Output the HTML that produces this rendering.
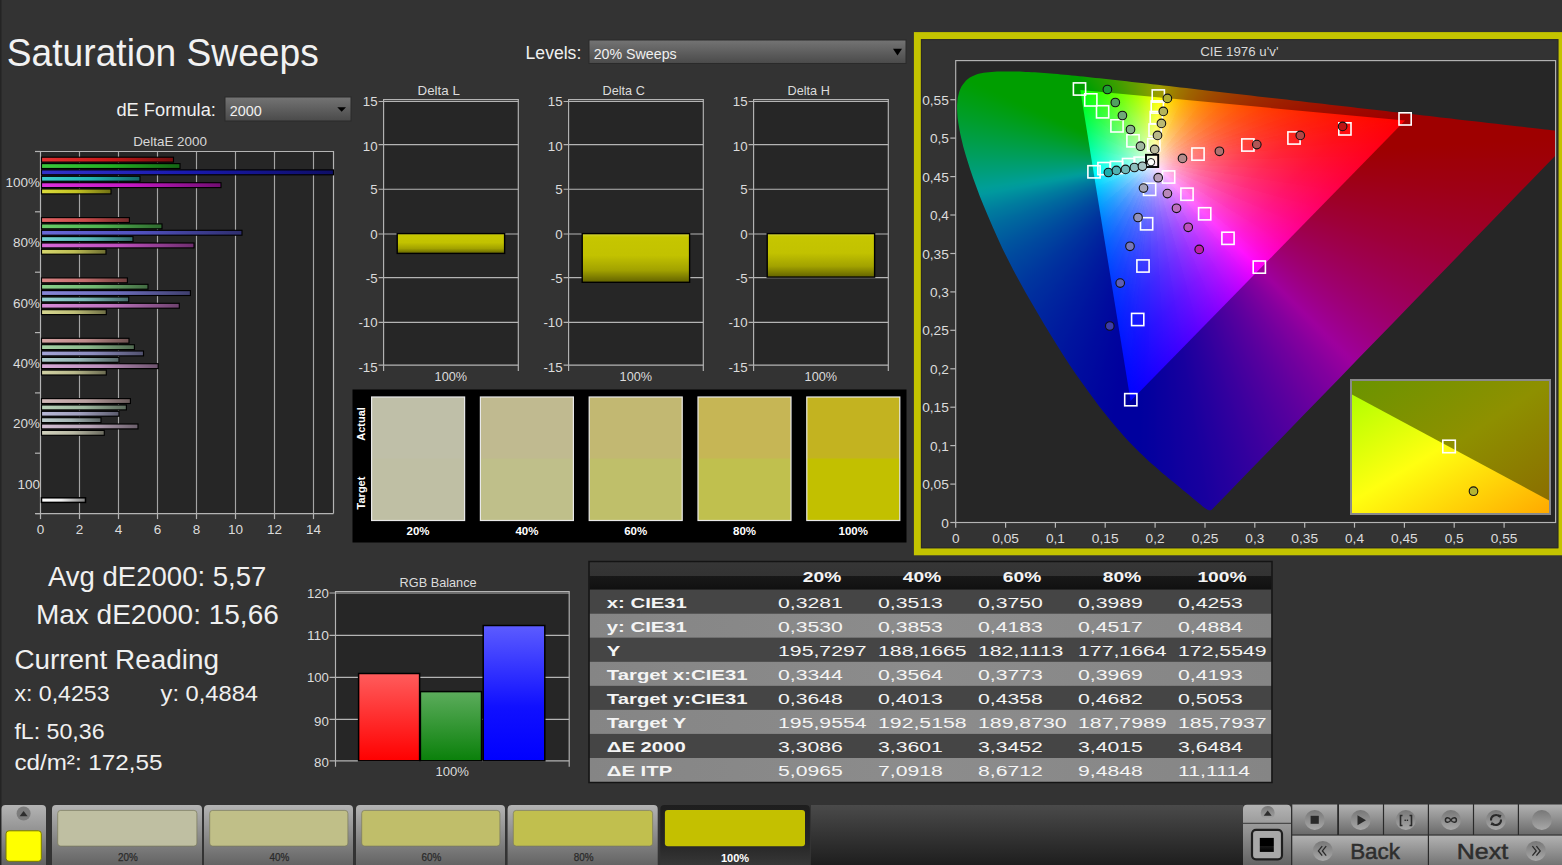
<!DOCTYPE html>
<html><head><meta charset="utf-8"><title>Saturation Sweeps</title>
<style>html,body{margin:0;padding:0;background:#333;width:1562px;height:865px;overflow:hidden}
svg text{font-family:"Liberation Sans",sans-serif}</style></head>
<body>
<svg width="1562" height="865" viewBox="0 0 1562 865" style="position:absolute;left:0;top:0" font-family='"Liberation Sans", sans-serif'>
<rect width="1562" height="865" fill="#333333"/>
<rect x="0" y="0" width="1.5" height="865" fill="#242424"/>
<text x="6.8" y="65.5" font-size="39.0" fill="#f2f2f2" text-anchor="start" font-weight="normal" textLength="312.0" lengthAdjust="spacingAndGlyphs" >Saturation Sweeps</text>
<text x="116.4" y="115.6" font-size="17.5" fill="#f0f0f0" text-anchor="start" font-weight="normal" textLength="99.5" lengthAdjust="spacingAndGlyphs" >dE Formula:</text>
<defs><linearGradient id="dd" x1="0" y1="0" x2="0" y2="1"><stop offset="0" stop-color="#747474"/><stop offset="1" stop-color="#4a4a4a"/></linearGradient></defs>
<rect x="225" y="97" width="126" height="24" fill="url(#dd)" stroke="#2a2a2a" stroke-width="1"/>
<text x="229.7" y="115.6" font-size="15.0" fill="#f0f0f0" text-anchor="start" font-weight="normal" textLength="32.0" lengthAdjust="spacingAndGlyphs" >2000</text>
<path d="M337.3 107.3 L346 107.3 L341.65 111.8 Z" fill="#000"/>
<text x="525.6" y="58.8" font-size="18.0" fill="#f0f0f0" text-anchor="start" font-weight="normal" textLength="55.7" lengthAdjust="spacingAndGlyphs" >Levels:</text>
<rect x="589" y="40" width="317" height="23.5" fill="url(#dd)" stroke="#2a2a2a" stroke-width="1"/>
<text x="593.7" y="58.8" font-size="15.0" fill="#f0f0f0" text-anchor="start" font-weight="normal" textLength="83.0" lengthAdjust="spacingAndGlyphs" >20% Sweeps</text>
<path d="M893 48.8 L902 48.8 L897.5 55.4 Z" fill="#000"/>
<text x="170.0" y="146.3" font-size="13.0" fill="#d8d8d8" text-anchor="middle" font-weight="normal" textLength="73.7" lengthAdjust="spacingAndGlyphs" >DeltaE 2000</text>
<rect x="40.5" y="151.5" width="293.0" height="362.1" fill="#262626"/>
<line x1="79.5" y1="151.5" x2="79.5" y2="513.6" stroke="#a4a4a4" stroke-width="1.15"/>
<line x1="118.5" y1="151.5" x2="118.5" y2="513.6" stroke="#a4a4a4" stroke-width="1.15"/>
<line x1="157.5" y1="151.5" x2="157.5" y2="513.6" stroke="#a4a4a4" stroke-width="1.15"/>
<line x1="196.5" y1="151.5" x2="196.5" y2="513.6" stroke="#a4a4a4" stroke-width="1.15"/>
<line x1="235.5" y1="151.5" x2="235.5" y2="513.6" stroke="#a4a4a4" stroke-width="1.15"/>
<line x1="274.5" y1="151.5" x2="274.5" y2="513.6" stroke="#a4a4a4" stroke-width="1.15"/>
<line x1="313.5" y1="151.5" x2="313.5" y2="513.6" stroke="#a4a4a4" stroke-width="1.15"/>
<polyline points="40.5,513.6 40.5,151.5 333.5,151.5 333.5,513.6" fill="none" stroke="#b4b4b4" stroke-width="1.2"/>
<line x1="35.5" y1="513.6" x2="333.5" y2="513.6" stroke="#b4b4b4" stroke-width="1.2"/>
<line x1="35.0" y1="151.5" x2="40.5" y2="151.5" stroke="#b4b4b4" stroke-width="1.2"/>
<line x1="35.0" y1="211.8" x2="40.5" y2="211.8" stroke="#b4b4b4" stroke-width="1.2"/>
<line x1="35.0" y1="272.2" x2="40.5" y2="272.2" stroke="#b4b4b4" stroke-width="1.2"/>
<line x1="35.0" y1="332.6" x2="40.5" y2="332.6" stroke="#b4b4b4" stroke-width="1.2"/>
<line x1="35.0" y1="392.9" x2="40.5" y2="392.9" stroke="#b4b4b4" stroke-width="1.2"/>
<line x1="35.0" y1="453.2" x2="40.5" y2="453.2" stroke="#b4b4b4" stroke-width="1.2"/>
<line x1="35.0" y1="513.6" x2="40.5" y2="513.6" stroke="#b4b4b4" stroke-width="1.2"/>
<line x1="40.5" y1="513.6" x2="40.5" y2="519.1" stroke="#b4b4b4" stroke-width="1.2"/>
<text x="40.5" y="534.0" font-size="13.5" fill="#dcdcdc" text-anchor="middle" font-weight="normal" >0</text>
<line x1="79.5" y1="513.6" x2="79.5" y2="519.1" stroke="#b4b4b4" stroke-width="1.2"/>
<text x="79.5" y="534.0" font-size="13.5" fill="#dcdcdc" text-anchor="middle" font-weight="normal" >2</text>
<line x1="118.5" y1="513.6" x2="118.5" y2="519.1" stroke="#b4b4b4" stroke-width="1.2"/>
<text x="118.5" y="534.0" font-size="13.5" fill="#dcdcdc" text-anchor="middle" font-weight="normal" >4</text>
<line x1="157.5" y1="513.6" x2="157.5" y2="519.1" stroke="#b4b4b4" stroke-width="1.2"/>
<text x="157.5" y="534.0" font-size="13.5" fill="#dcdcdc" text-anchor="middle" font-weight="normal" >6</text>
<line x1="196.5" y1="513.6" x2="196.5" y2="519.1" stroke="#b4b4b4" stroke-width="1.2"/>
<text x="196.5" y="534.0" font-size="13.5" fill="#dcdcdc" text-anchor="middle" font-weight="normal" >8</text>
<line x1="235.5" y1="513.6" x2="235.5" y2="519.1" stroke="#b4b4b4" stroke-width="1.2"/>
<text x="235.5" y="534.0" font-size="13.5" fill="#dcdcdc" text-anchor="middle" font-weight="normal" >10</text>
<line x1="274.5" y1="513.6" x2="274.5" y2="519.1" stroke="#b4b4b4" stroke-width="1.2"/>
<text x="274.5" y="534.0" font-size="13.5" fill="#dcdcdc" text-anchor="middle" font-weight="normal" >12</text>
<line x1="313.5" y1="513.6" x2="313.5" y2="519.1" stroke="#b4b4b4" stroke-width="1.2"/>
<text x="313.5" y="534.0" font-size="13.5" fill="#dcdcdc" text-anchor="middle" font-weight="normal" >14</text>
<text x="40.0" y="186.9" font-size="13.5" fill="#dcdcdc" text-anchor="end" font-weight="normal" >100%</text>
<text x="40.0" y="247.2" font-size="13.5" fill="#dcdcdc" text-anchor="end" font-weight="normal" >80%</text>
<text x="40.0" y="307.6" font-size="13.5" fill="#dcdcdc" text-anchor="end" font-weight="normal" >60%</text>
<text x="40.0" y="367.9" font-size="13.5" fill="#dcdcdc" text-anchor="end" font-weight="normal" >40%</text>
<text x="40.0" y="428.3" font-size="13.5" fill="#dcdcdc" text-anchor="end" font-weight="normal" >20%</text>
<text x="40.0" y="488.6" font-size="13.5" fill="#dcdcdc" text-anchor="end" font-weight="normal" >100</text>
<rect x="41.5" y="157.2" width="132.0" height="4.9" fill="url(#eb1)" stroke="#000" stroke-width="1.15"/>
<rect x="41.5" y="163.6" width="138.5" height="4.9" fill="url(#eb2)" stroke="#000" stroke-width="1.15"/>
<rect x="41.5" y="169.9" width="292.0" height="4.9" fill="url(#eb3)" stroke="#000" stroke-width="1.15"/>
<rect x="41.5" y="176.3" width="98.5" height="4.9" fill="url(#eb4)" stroke="#000" stroke-width="1.15"/>
<rect x="41.5" y="182.7" width="179.5" height="4.9" fill="url(#eb5)" stroke="#000" stroke-width="1.15"/>
<rect x="41.5" y="189.0" width="69.5" height="4.9" fill="url(#eb6)" stroke="#000" stroke-width="1.15"/>
<rect x="41.5" y="217.6" width="87.9" height="4.9" fill="url(#eb7)" stroke="#000" stroke-width="1.15"/>
<rect x="41.5" y="223.9" width="120.5" height="4.9" fill="url(#eb8)" stroke="#000" stroke-width="1.15"/>
<rect x="41.5" y="230.3" width="200.5" height="4.9" fill="url(#eb9)" stroke="#000" stroke-width="1.15"/>
<rect x="41.5" y="236.6" width="91.5" height="4.9" fill="url(#eb10)" stroke="#000" stroke-width="1.15"/>
<rect x="41.5" y="243.0" width="152.5" height="4.9" fill="url(#eb11)" stroke="#000" stroke-width="1.15"/>
<rect x="41.5" y="249.3" width="64.5" height="4.9" fill="url(#eb12)" stroke="#000" stroke-width="1.15"/>
<rect x="41.5" y="277.9" width="85.9" height="4.9" fill="url(#eb13)" stroke="#000" stroke-width="1.15"/>
<rect x="41.5" y="284.3" width="106.5" height="4.9" fill="url(#eb14)" stroke="#000" stroke-width="1.15"/>
<rect x="41.5" y="290.6" width="148.9" height="4.9" fill="url(#eb15)" stroke="#000" stroke-width="1.15"/>
<rect x="41.5" y="297.0" width="87.2" height="4.9" fill="url(#eb16)" stroke="#000" stroke-width="1.15"/>
<rect x="41.5" y="303.3" width="137.8" height="4.9" fill="url(#eb17)" stroke="#000" stroke-width="1.15"/>
<rect x="41.5" y="309.7" width="64.8" height="4.9" fill="url(#eb18)" stroke="#000" stroke-width="1.15"/>
<rect x="41.5" y="338.3" width="87.5" height="4.9" fill="url(#eb19)" stroke="#000" stroke-width="1.15"/>
<rect x="41.5" y="344.7" width="92.9" height="4.9" fill="url(#eb20)" stroke="#000" stroke-width="1.15"/>
<rect x="41.5" y="351.0" width="102.0" height="4.9" fill="url(#eb21)" stroke="#000" stroke-width="1.15"/>
<rect x="41.5" y="357.4" width="77.5" height="4.9" fill="url(#eb22)" stroke="#000" stroke-width="1.15"/>
<rect x="41.5" y="363.7" width="116.7" height="4.9" fill="url(#eb23)" stroke="#000" stroke-width="1.15"/>
<rect x="41.5" y="370.1" width="64.8" height="4.9" fill="url(#eb24)" stroke="#000" stroke-width="1.15"/>
<rect x="41.5" y="398.6" width="88.9" height="4.9" fill="url(#eb25)" stroke="#000" stroke-width="1.15"/>
<rect x="41.5" y="405.0" width="84.9" height="4.9" fill="url(#eb26)" stroke="#000" stroke-width="1.15"/>
<rect x="41.5" y="411.3" width="77.5" height="4.9" fill="url(#eb27)" stroke="#000" stroke-width="1.15"/>
<rect x="41.5" y="417.7" width="59.5" height="4.9" fill="url(#eb28)" stroke="#000" stroke-width="1.15"/>
<rect x="41.5" y="424.0" width="96.5" height="4.9" fill="url(#eb29)" stroke="#000" stroke-width="1.15"/>
<rect x="41.5" y="430.4" width="62.8" height="4.9" fill="url(#eb30)" stroke="#000" stroke-width="1.15"/>
<rect x="41.5" y="497.8" width="44.0" height="4.6" fill="url(#ebw)" stroke="#000" stroke-width="1.5"/>
<defs><linearGradient id="eb1" x1="0" y1="0" x2="1" y2="0"><stop offset="0" stop-color="rgb(225, 50, 50)"/><stop offset="0.5" stop-color="rgb(200, 25, 25)"/><stop offset="1" stop-color="rgb(115, 14, 14)"/></linearGradient><linearGradient id="eb2" x1="0" y1="0" x2="1" y2="0"><stop offset="0" stop-color="rgb(60, 200, 60)"/><stop offset="0.5" stop-color="rgb(35, 175, 35)"/><stop offset="1" stop-color="rgb(20, 101, 20)"/></linearGradient><linearGradient id="eb3" x1="0" y1="0" x2="1" y2="0"><stop offset="0" stop-color="rgb(50, 50, 200)"/><stop offset="0.5" stop-color="rgb(25, 25, 175)"/><stop offset="1" stop-color="rgb(14, 14, 101)"/></linearGradient><linearGradient id="eb4" x1="0" y1="0" x2="1" y2="0"><stop offset="0" stop-color="rgb(60, 205, 205)"/><stop offset="0.5" stop-color="rgb(35, 180, 180)"/><stop offset="1" stop-color="rgb(20, 104, 104)"/></linearGradient><linearGradient id="eb5" x1="0" y1="0" x2="1" y2="0"><stop offset="0" stop-color="rgb(220, 50, 220)"/><stop offset="0.5" stop-color="rgb(195, 25, 195)"/><stop offset="1" stop-color="rgb(113, 14, 113)"/></linearGradient><linearGradient id="eb6" x1="0" y1="0" x2="1" y2="0"><stop offset="0" stop-color="rgb(220, 220, 60)"/><stop offset="0.5" stop-color="rgb(195, 195, 35)"/><stop offset="1" stop-color="rgb(113, 113, 20)"/></linearGradient><linearGradient id="eb7" x1="0" y1="0" x2="1" y2="0"><stop offset="0" stop-color="rgb(225, 100, 100)"/><stop offset="0.5" stop-color="rgb(200, 75, 75)"/><stop offset="1" stop-color="rgb(115, 43, 43)"/></linearGradient><linearGradient id="eb8" x1="0" y1="0" x2="1" y2="0"><stop offset="0" stop-color="rgb(105, 205, 105)"/><stop offset="0.5" stop-color="rgb(80, 180, 80)"/><stop offset="1" stop-color="rgb(46, 104, 46)"/></linearGradient><linearGradient id="eb9" x1="0" y1="0" x2="1" y2="0"><stop offset="0" stop-color="rgb(105, 105, 215)"/><stop offset="0.5" stop-color="rgb(80, 80, 190)"/><stop offset="1" stop-color="rgb(46, 46, 110)"/></linearGradient><linearGradient id="eb10" x1="0" y1="0" x2="1" y2="0"><stop offset="0" stop-color="rgb(115, 210, 210)"/><stop offset="0.5" stop-color="rgb(90, 185, 185)"/><stop offset="1" stop-color="rgb(52, 107, 107)"/></linearGradient><linearGradient id="eb11" x1="0" y1="0" x2="1" y2="0"><stop offset="0" stop-color="rgb(215, 105, 215)"/><stop offset="0.5" stop-color="rgb(190, 80, 190)"/><stop offset="1" stop-color="rgb(110, 46, 110)"/></linearGradient><linearGradient id="eb12" x1="0" y1="0" x2="1" y2="0"><stop offset="0" stop-color="rgb(215, 215, 110)"/><stop offset="0.5" stop-color="rgb(190, 190, 85)"/><stop offset="1" stop-color="rgb(110, 110, 49)"/></linearGradient><linearGradient id="eb13" x1="0" y1="0" x2="1" y2="0"><stop offset="0" stop-color="rgb(220, 135, 135)"/><stop offset="0.5" stop-color="rgb(195, 110, 110)"/><stop offset="1" stop-color="rgb(113, 63, 63)"/></linearGradient><linearGradient id="eb14" x1="0" y1="0" x2="1" y2="0"><stop offset="0" stop-color="rgb(140, 210, 140)"/><stop offset="0.5" stop-color="rgb(115, 185, 115)"/><stop offset="1" stop-color="rgb(66, 107, 66)"/></linearGradient><linearGradient id="eb15" x1="0" y1="0" x2="1" y2="0"><stop offset="0" stop-color="rgb(135, 135, 215)"/><stop offset="0.5" stop-color="rgb(110, 110, 190)"/><stop offset="1" stop-color="rgb(63, 63, 110)"/></linearGradient><linearGradient id="eb16" x1="0" y1="0" x2="1" y2="0"><stop offset="0" stop-color="rgb(150, 210, 210)"/><stop offset="0.5" stop-color="rgb(125, 185, 185)"/><stop offset="1" stop-color="rgb(72, 107, 107)"/></linearGradient><linearGradient id="eb17" x1="0" y1="0" x2="1" y2="0"><stop offset="0" stop-color="rgb(215, 140, 215)"/><stop offset="0.5" stop-color="rgb(190, 115, 190)"/><stop offset="1" stop-color="rgb(110, 66, 110)"/></linearGradient><linearGradient id="eb18" x1="0" y1="0" x2="1" y2="0"><stop offset="0" stop-color="rgb(215, 215, 145)"/><stop offset="0.5" stop-color="rgb(190, 190, 120)"/><stop offset="1" stop-color="rgb(110, 110, 69)"/></linearGradient><linearGradient id="eb19" x1="0" y1="0" x2="1" y2="0"><stop offset="0" stop-color="rgb(215, 165, 165)"/><stop offset="0.5" stop-color="rgb(190, 140, 140)"/><stop offset="1" stop-color="rgb(110, 81, 81)"/></linearGradient><linearGradient id="eb20" x1="0" y1="0" x2="1" y2="0"><stop offset="0" stop-color="rgb(165, 210, 165)"/><stop offset="0.5" stop-color="rgb(140, 185, 140)"/><stop offset="1" stop-color="rgb(81, 107, 81)"/></linearGradient><linearGradient id="eb21" x1="0" y1="0" x2="1" y2="0"><stop offset="0" stop-color="rgb(165, 165, 215)"/><stop offset="0.5" stop-color="rgb(140, 140, 190)"/><stop offset="1" stop-color="rgb(81, 81, 110)"/></linearGradient><linearGradient id="eb22" x1="0" y1="0" x2="1" y2="0"><stop offset="0" stop-color="rgb(175, 205, 205)"/><stop offset="0.5" stop-color="rgb(150, 180, 180)"/><stop offset="1" stop-color="rgb(87, 104, 104)"/></linearGradient><linearGradient id="eb23" x1="0" y1="0" x2="1" y2="0"><stop offset="0" stop-color="rgb(215, 170, 215)"/><stop offset="0.5" stop-color="rgb(190, 145, 190)"/><stop offset="1" stop-color="rgb(110, 84, 110)"/></linearGradient><linearGradient id="eb24" x1="0" y1="0" x2="1" y2="0"><stop offset="0" stop-color="rgb(210, 210, 165)"/><stop offset="0.5" stop-color="rgb(185, 185, 140)"/><stop offset="1" stop-color="rgb(107, 107, 81)"/></linearGradient><linearGradient id="eb25" x1="0" y1="0" x2="1" y2="0"><stop offset="0" stop-color="rgb(210, 185, 185)"/><stop offset="0.5" stop-color="rgb(185, 160, 160)"/><stop offset="1" stop-color="rgb(107, 92, 92)"/></linearGradient><linearGradient id="eb26" x1="0" y1="0" x2="1" y2="0"><stop offset="0" stop-color="rgb(185, 210, 185)"/><stop offset="0.5" stop-color="rgb(160, 185, 160)"/><stop offset="1" stop-color="rgb(92, 107, 92)"/></linearGradient><linearGradient id="eb27" x1="0" y1="0" x2="1" y2="0"><stop offset="0" stop-color="rgb(185, 185, 215)"/><stop offset="0.5" stop-color="rgb(160, 160, 190)"/><stop offset="1" stop-color="rgb(92, 92, 110)"/></linearGradient><linearGradient id="eb28" x1="0" y1="0" x2="1" y2="0"><stop offset="0" stop-color="rgb(190, 205, 205)"/><stop offset="0.5" stop-color="rgb(165, 180, 180)"/><stop offset="1" stop-color="rgb(95, 104, 104)"/></linearGradient><linearGradient id="eb29" x1="0" y1="0" x2="1" y2="0"><stop offset="0" stop-color="rgb(210, 190, 210)"/><stop offset="0.5" stop-color="rgb(185, 165, 185)"/><stop offset="1" stop-color="rgb(107, 95, 107)"/></linearGradient><linearGradient id="eb30" x1="0" y1="0" x2="1" y2="0"><stop offset="0" stop-color="rgb(210, 210, 190)"/><stop offset="0.5" stop-color="rgb(185, 185, 165)"/><stop offset="1" stop-color="rgb(107, 107, 95)"/></linearGradient><linearGradient id="ebw" x1="0" y1="0" x2="1" y2="0"><stop offset="0" stop-color="#ffffff"/><stop offset="0.45" stop-color="#f0f0f0"/><stop offset="1" stop-color="#808080"/></linearGradient></defs>
<defs><linearGradient id="yb" x1="0" y1="0" x2="0" y2="1"><stop offset="0" stop-color="#d4d440"/><stop offset="0.07" stop-color="#c6c600"/><stop offset="0.45" stop-color="#c2c200"/><stop offset="0.75" stop-color="#a2a200"/><stop offset="1" stop-color="#626200"/></linearGradient></defs>
<text x="438.7" y="95.0" font-size="12.8" fill="#dcdcdc" text-anchor="middle" font-weight="normal" textLength="42.2" lengthAdjust="spacingAndGlyphs" >Delta L</text>
<rect x="383.6" y="99.6" width="134.7" height="265.5" fill="#262626"/>
<line x1="378.6" y1="101.5" x2="518.3" y2="101.5" stroke="#b4b4b4" stroke-width="1.15"/>
<text x="377.6" y="106.1" font-size="13.3" fill="#dcdcdc" text-anchor="end" font-weight="normal" >15</text>
<line x1="378.6" y1="144.6" x2="518.3" y2="144.6" stroke="#b4b4b4" stroke-width="1.15"/>
<text x="377.6" y="150.5" font-size="13.3" fill="#dcdcdc" text-anchor="end" font-weight="normal" >10</text>
<line x1="378.6" y1="189.2" x2="518.3" y2="189.2" stroke="#b4b4b4" stroke-width="1.15"/>
<text x="377.6" y="193.8" font-size="13.3" fill="#dcdcdc" text-anchor="end" font-weight="normal" >5</text>
<line x1="378.6" y1="234.0" x2="518.3" y2="234.0" stroke="#b4b4b4" stroke-width="1.15"/>
<text x="377.6" y="238.6" font-size="13.3" fill="#dcdcdc" text-anchor="end" font-weight="normal" >0</text>
<line x1="378.6" y1="277.6" x2="518.3" y2="277.6" stroke="#b4b4b4" stroke-width="1.15"/>
<text x="377.6" y="282.6" font-size="13.3" fill="#dcdcdc" text-anchor="end" font-weight="normal" >-5</text>
<line x1="378.6" y1="322.3" x2="518.3" y2="322.3" stroke="#b4b4b4" stroke-width="1.15"/>
<text x="377.6" y="326.9" font-size="13.3" fill="#dcdcdc" text-anchor="end" font-weight="normal" >-10</text>
<line x1="378.6" y1="365.1" x2="518.3" y2="365.1" stroke="#b4b4b4" stroke-width="1.15"/>
<text x="377.6" y="371.7" font-size="13.3" fill="#dcdcdc" text-anchor="end" font-weight="normal" >-15</text>
<polyline points="383.6,371.1 383.6,99.6 518.3,99.6 518.3,371.1" fill="none" stroke="#b4b4b4" stroke-width="1.15"/>
<rect x="397.2" y="233.6" width="107.4" height="19.8" fill="url(#yb)" stroke="#000" stroke-width="1.4"/>
<text x="450.8" y="380.5" font-size="13.3" fill="#dcdcdc" text-anchor="middle" font-weight="normal" textLength="32.4" lengthAdjust="spacingAndGlyphs" >100%</text>
<text x="623.7" y="95.0" font-size="12.8" fill="#dcdcdc" text-anchor="middle" font-weight="normal" textLength="42.2" lengthAdjust="spacingAndGlyphs" >Delta C</text>
<rect x="568.6" y="99.6" width="134.7" height="265.5" fill="#262626"/>
<line x1="563.6" y1="101.5" x2="703.3" y2="101.5" stroke="#b4b4b4" stroke-width="1.15"/>
<text x="562.6" y="106.1" font-size="13.3" fill="#dcdcdc" text-anchor="end" font-weight="normal" >15</text>
<line x1="563.6" y1="144.6" x2="703.3" y2="144.6" stroke="#b4b4b4" stroke-width="1.15"/>
<text x="562.6" y="150.5" font-size="13.3" fill="#dcdcdc" text-anchor="end" font-weight="normal" >10</text>
<line x1="563.6" y1="189.2" x2="703.3" y2="189.2" stroke="#b4b4b4" stroke-width="1.15"/>
<text x="562.6" y="193.8" font-size="13.3" fill="#dcdcdc" text-anchor="end" font-weight="normal" >5</text>
<line x1="563.6" y1="234.0" x2="703.3" y2="234.0" stroke="#b4b4b4" stroke-width="1.15"/>
<text x="562.6" y="238.6" font-size="13.3" fill="#dcdcdc" text-anchor="end" font-weight="normal" >0</text>
<line x1="563.6" y1="277.6" x2="703.3" y2="277.6" stroke="#b4b4b4" stroke-width="1.15"/>
<text x="562.6" y="282.6" font-size="13.3" fill="#dcdcdc" text-anchor="end" font-weight="normal" >-5</text>
<line x1="563.6" y1="322.3" x2="703.3" y2="322.3" stroke="#b4b4b4" stroke-width="1.15"/>
<text x="562.6" y="326.9" font-size="13.3" fill="#dcdcdc" text-anchor="end" font-weight="normal" >-10</text>
<line x1="563.6" y1="365.1" x2="703.3" y2="365.1" stroke="#b4b4b4" stroke-width="1.15"/>
<text x="562.6" y="371.7" font-size="13.3" fill="#dcdcdc" text-anchor="end" font-weight="normal" >-15</text>
<polyline points="568.6,371.1 568.6,99.6 703.3,99.6 703.3,371.1" fill="none" stroke="#b4b4b4" stroke-width="1.15"/>
<rect x="582.2" y="233.6" width="107.4" height="48.7" fill="url(#yb)" stroke="#000" stroke-width="1.4"/>
<text x="635.8" y="380.5" font-size="13.3" fill="#dcdcdc" text-anchor="middle" font-weight="normal" textLength="32.4" lengthAdjust="spacingAndGlyphs" >100%</text>
<text x="808.7" y="95.0" font-size="12.8" fill="#dcdcdc" text-anchor="middle" font-weight="normal" textLength="42.2" lengthAdjust="spacingAndGlyphs" >Delta H</text>
<rect x="753.6" y="99.6" width="134.7" height="265.5" fill="#262626"/>
<line x1="748.6" y1="101.5" x2="888.3" y2="101.5" stroke="#b4b4b4" stroke-width="1.15"/>
<text x="747.6" y="106.1" font-size="13.3" fill="#dcdcdc" text-anchor="end" font-weight="normal" >15</text>
<line x1="748.6" y1="144.6" x2="888.3" y2="144.6" stroke="#b4b4b4" stroke-width="1.15"/>
<text x="747.6" y="150.5" font-size="13.3" fill="#dcdcdc" text-anchor="end" font-weight="normal" >10</text>
<line x1="748.6" y1="189.2" x2="888.3" y2="189.2" stroke="#b4b4b4" stroke-width="1.15"/>
<text x="747.6" y="193.8" font-size="13.3" fill="#dcdcdc" text-anchor="end" font-weight="normal" >5</text>
<line x1="748.6" y1="234.0" x2="888.3" y2="234.0" stroke="#b4b4b4" stroke-width="1.15"/>
<text x="747.6" y="238.6" font-size="13.3" fill="#dcdcdc" text-anchor="end" font-weight="normal" >0</text>
<line x1="748.6" y1="277.6" x2="888.3" y2="277.6" stroke="#b4b4b4" stroke-width="1.15"/>
<text x="747.6" y="282.6" font-size="13.3" fill="#dcdcdc" text-anchor="end" font-weight="normal" >-5</text>
<line x1="748.6" y1="322.3" x2="888.3" y2="322.3" stroke="#b4b4b4" stroke-width="1.15"/>
<text x="747.6" y="326.9" font-size="13.3" fill="#dcdcdc" text-anchor="end" font-weight="normal" >-10</text>
<line x1="748.6" y1="365.1" x2="888.3" y2="365.1" stroke="#b4b4b4" stroke-width="1.15"/>
<text x="747.6" y="371.7" font-size="13.3" fill="#dcdcdc" text-anchor="end" font-weight="normal" >-15</text>
<polyline points="753.6,371.1 753.6,99.6 888.3,99.6 888.3,371.1" fill="none" stroke="#b4b4b4" stroke-width="1.15"/>
<rect x="767.2" y="233.6" width="107.4" height="43.5" fill="url(#yb)" stroke="#000" stroke-width="1.4"/>
<text x="820.8" y="380.5" font-size="13.3" fill="#dcdcdc" text-anchor="middle" font-weight="normal" textLength="32.4" lengthAdjust="spacingAndGlyphs" >100%</text>
<rect x="352.5" y="389.5" width="554" height="153" fill="#000"/>
<rect x="371.6" y="397" width="93" height="123.5" fill="rgb(191, 191, 164)"/>
<rect x="371.6" y="397" width="93" height="61.5" fill="rgb(191, 191, 168)"/>
<rect x="371.6" y="397" width="93" height="123.5" fill="none" stroke="#e8e8e8" stroke-width="1.2"/>
<text x="418.1" y="535.0" font-size="11.5" fill="#ffffff" text-anchor="middle" font-weight="bold" >20%</text>
<rect x="480.4" y="397" width="93" height="123.5" fill="rgb(191, 191, 138)"/>
<rect x="480.4" y="397" width="93" height="61.5" fill="rgb(192, 186, 144)"/>
<rect x="480.4" y="397" width="93" height="123.5" fill="none" stroke="#e8e8e8" stroke-width="1.2"/>
<text x="526.9" y="535.0" font-size="11.5" fill="#ffffff" text-anchor="middle" font-weight="bold" >40%</text>
<rect x="589.2" y="397" width="93" height="123.5" fill="rgb(191, 191, 106)"/>
<rect x="589.2" y="397" width="93" height="61.5" fill="rgb(194, 184, 114)"/>
<rect x="589.2" y="397" width="93" height="123.5" fill="none" stroke="#e8e8e8" stroke-width="1.2"/>
<text x="635.7" y="535.0" font-size="11.5" fill="#ffffff" text-anchor="middle" font-weight="bold" >60%</text>
<rect x="698.0" y="397" width="93" height="123.5" fill="rgb(192, 192, 78)"/>
<rect x="698.0" y="397" width="93" height="61.5" fill="rgb(198, 182, 85)"/>
<rect x="698.0" y="397" width="93" height="123.5" fill="none" stroke="#e8e8e8" stroke-width="1.2"/>
<text x="744.5" y="535.0" font-size="11.5" fill="#ffffff" text-anchor="middle" font-weight="bold" >80%</text>
<rect x="806.8" y="397" width="93" height="123.5" fill="rgb(194, 192, 0)"/>
<rect x="806.8" y="397" width="93" height="61.5" fill="rgb(195, 179, 32)"/>
<rect x="806.8" y="397" width="93" height="123.5" fill="none" stroke="#e8e8e8" stroke-width="1.2"/>
<text x="853.3" y="535.0" font-size="11.5" fill="#ffffff" text-anchor="middle" font-weight="bold" >100%</text>
<text transform="translate(365,424) rotate(-90)" font-size="11" font-weight="bold" fill="#fff" text-anchor="middle">Actual</text>
<text transform="translate(365,493) rotate(-90)" font-size="11" font-weight="bold" fill="#fff" text-anchor="middle">Target</text>
<rect x="917.4" y="35.6" width="644.5" height="516.2" fill="#333333" stroke="#c4c400" stroke-width="7"/>
<rect x="921.4" y="39.6" width="636.5" height="508.2" fill="none" stroke="#262620" stroke-width="1" opacity="0.7"/>
<text x="1239.3" y="55.7" font-size="12.3" fill="#d8d8d8" text-anchor="middle" font-weight="normal" textLength="78.3" lengthAdjust="spacingAndGlyphs" >CIE 1976 u'v'</text>
<rect x="955.7" y="60.6" width="599.9" height="461.9" fill="#262626"/>
<defs><clipPath id="cieclip"><rect x="955.7" y="60.6" width="599.9" height="461.9"/></clipPath></defs>
<g clip-path="url(#cieclip)">
<defs><linearGradient id="o1" gradientUnits="userSpaceOnUse" x1="1152.9" y1="162.5" x2="1159.0" y2="97.5"><stop offset="0.00" stop-color="#fff" stop-opacity="1.000"/><stop offset="0.04" stop-color="#fff" stop-opacity="0.824"/><stop offset="0.10" stop-color="#fff" stop-opacity="0.639"/><stop offset="0.18" stop-color="#fff" stop-opacity="0.475"/><stop offset="0.28" stop-color="#fff" stop-opacity="0.337"/><stop offset="0.40" stop-color="#fff" stop-opacity="0.227"/><stop offset="0.55" stop-color="#fff" stop-opacity="0.137"/><stop offset="0.75" stop-color="#fff" stop-opacity="0.063"/><stop offset="1.00" stop-color="#fff" stop-opacity="0.000"/></linearGradient><linearGradient id="o2" gradientUnits="userSpaceOnUse" x1="1152.9" y1="162.5" x2="1159.0" y2="97.5"><stop offset="0.00" stop-color="#fff" stop-opacity="1.000"/><stop offset="0.04" stop-color="#fff" stop-opacity="0.835"/><stop offset="0.10" stop-color="#fff" stop-opacity="0.655"/><stop offset="0.18" stop-color="#fff" stop-opacity="0.490"/><stop offset="0.28" stop-color="#fff" stop-opacity="0.349"/><stop offset="0.40" stop-color="#fff" stop-opacity="0.239"/><stop offset="0.55" stop-color="#fff" stop-opacity="0.145"/><stop offset="0.75" stop-color="#fff" stop-opacity="0.067"/><stop offset="1.00" stop-color="#fff" stop-opacity="0.000"/></linearGradient><linearGradient id="o3" gradientUnits="userSpaceOnUse" x1="1152.9" y1="162.5" x2="1159.0" y2="97.5"><stop offset="0.00" stop-color="#fff" stop-opacity="1.000"/><stop offset="0.04" stop-color="#fff" stop-opacity="0.843"/><stop offset="0.10" stop-color="#fff" stop-opacity="0.671"/><stop offset="0.18" stop-color="#fff" stop-opacity="0.506"/><stop offset="0.28" stop-color="#fff" stop-opacity="0.369"/><stop offset="0.40" stop-color="#fff" stop-opacity="0.255"/><stop offset="0.55" stop-color="#fff" stop-opacity="0.157"/><stop offset="0.75" stop-color="#fff" stop-opacity="0.071"/><stop offset="1.00" stop-color="#fff" stop-opacity="0.000"/></linearGradient><linearGradient id="o4" gradientUnits="userSpaceOnUse" x1="1152.9" y1="162.5" x2="1159.0" y2="97.5"><stop offset="0.00" stop-color="#fff" stop-opacity="1.000"/><stop offset="0.04" stop-color="#fff" stop-opacity="0.855"/><stop offset="0.10" stop-color="#fff" stop-opacity="0.686"/><stop offset="0.18" stop-color="#fff" stop-opacity="0.525"/><stop offset="0.28" stop-color="#fff" stop-opacity="0.384"/><stop offset="0.40" stop-color="#fff" stop-opacity="0.267"/><stop offset="0.55" stop-color="#fff" stop-opacity="0.165"/><stop offset="0.75" stop-color="#fff" stop-opacity="0.075"/><stop offset="1.00" stop-color="#fff" stop-opacity="0.000"/></linearGradient><linearGradient id="o5" gradientUnits="userSpaceOnUse" x1="1152.9" y1="162.5" x2="1159.0" y2="97.5"><stop offset="0.00" stop-color="#fff" stop-opacity="1.000"/><stop offset="0.04" stop-color="#fff" stop-opacity="0.863"/><stop offset="0.10" stop-color="#fff" stop-opacity="0.706"/><stop offset="0.18" stop-color="#fff" stop-opacity="0.545"/><stop offset="0.28" stop-color="#fff" stop-opacity="0.404"/><stop offset="0.40" stop-color="#fff" stop-opacity="0.286"/><stop offset="0.55" stop-color="#fff" stop-opacity="0.176"/><stop offset="0.75" stop-color="#fff" stop-opacity="0.082"/><stop offset="1.00" stop-color="#fff" stop-opacity="0.000"/></linearGradient><linearGradient id="o6" gradientUnits="userSpaceOnUse" x1="1152.9" y1="162.5" x2="1159.0" y2="97.5"><stop offset="0.00" stop-color="#fff" stop-opacity="1.000"/><stop offset="0.04" stop-color="#fff" stop-opacity="0.875"/><stop offset="0.10" stop-color="#fff" stop-opacity="0.722"/><stop offset="0.18" stop-color="#fff" stop-opacity="0.569"/><stop offset="0.28" stop-color="#fff" stop-opacity="0.427"/><stop offset="0.40" stop-color="#fff" stop-opacity="0.302"/><stop offset="0.55" stop-color="#fff" stop-opacity="0.192"/><stop offset="0.75" stop-color="#fff" stop-opacity="0.090"/><stop offset="1.00" stop-color="#fff" stop-opacity="0.000"/></linearGradient><linearGradient id="o7" gradientUnits="userSpaceOnUse" x1="1152.9" y1="162.5" x2="1159.0" y2="97.5"><stop offset="0.00" stop-color="#fff" stop-opacity="1.000"/><stop offset="0.04" stop-color="#fff" stop-opacity="0.886"/><stop offset="0.10" stop-color="#fff" stop-opacity="0.741"/><stop offset="0.18" stop-color="#fff" stop-opacity="0.592"/><stop offset="0.28" stop-color="#fff" stop-opacity="0.451"/><stop offset="0.40" stop-color="#fff" stop-opacity="0.325"/><stop offset="0.55" stop-color="#fff" stop-opacity="0.208"/><stop offset="0.75" stop-color="#fff" stop-opacity="0.098"/><stop offset="1.00" stop-color="#fff" stop-opacity="0.000"/></linearGradient><linearGradient id="o8" gradientUnits="userSpaceOnUse" x1="1152.9" y1="162.5" x2="1159.0" y2="97.5"><stop offset="0.00" stop-color="#fff" stop-opacity="1.000"/><stop offset="0.04" stop-color="#fff" stop-opacity="0.898"/><stop offset="0.10" stop-color="#fff" stop-opacity="0.765"/><stop offset="0.18" stop-color="#fff" stop-opacity="0.620"/><stop offset="0.28" stop-color="#fff" stop-opacity="0.478"/><stop offset="0.40" stop-color="#fff" stop-opacity="0.349"/><stop offset="0.55" stop-color="#fff" stop-opacity="0.227"/><stop offset="0.75" stop-color="#fff" stop-opacity="0.106"/><stop offset="1.00" stop-color="#fff" stop-opacity="0.000"/></linearGradient><linearGradient id="o9" gradientUnits="userSpaceOnUse" x1="1152.9" y1="162.5" x2="1159.0" y2="97.5"><stop offset="0.00" stop-color="#fff" stop-opacity="1.000"/><stop offset="0.04" stop-color="#fff" stop-opacity="0.906"/><stop offset="0.10" stop-color="#fff" stop-opacity="0.784"/><stop offset="0.18" stop-color="#fff" stop-opacity="0.651"/><stop offset="0.28" stop-color="#fff" stop-opacity="0.510"/><stop offset="0.40" stop-color="#fff" stop-opacity="0.380"/><stop offset="0.55" stop-color="#fff" stop-opacity="0.251"/><stop offset="0.75" stop-color="#fff" stop-opacity="0.118"/><stop offset="1.00" stop-color="#fff" stop-opacity="0.000"/></linearGradient><linearGradient id="o10" gradientUnits="userSpaceOnUse" x1="1152.9" y1="162.5" x2="1159.0" y2="97.5"><stop offset="0.00" stop-color="#fff" stop-opacity="1.000"/><stop offset="0.04" stop-color="#fff" stop-opacity="0.918"/><stop offset="0.10" stop-color="#fff" stop-opacity="0.808"/><stop offset="0.18" stop-color="#fff" stop-opacity="0.682"/><stop offset="0.28" stop-color="#fff" stop-opacity="0.545"/><stop offset="0.40" stop-color="#fff" stop-opacity="0.412"/><stop offset="0.55" stop-color="#fff" stop-opacity="0.278"/><stop offset="0.75" stop-color="#fff" stop-opacity="0.133"/><stop offset="1.00" stop-color="#fff" stop-opacity="0.000"/></linearGradient><linearGradient id="o11" gradientUnits="userSpaceOnUse" x1="1152.9" y1="162.5" x2="1159.0" y2="97.5"><stop offset="0.00" stop-color="#fff" stop-opacity="1.000"/><stop offset="0.04" stop-color="#fff" stop-opacity="0.929"/><stop offset="0.10" stop-color="#fff" stop-opacity="0.831"/><stop offset="0.18" stop-color="#fff" stop-opacity="0.718"/><stop offset="0.28" stop-color="#fff" stop-opacity="0.588"/><stop offset="0.40" stop-color="#fff" stop-opacity="0.455"/><stop offset="0.55" stop-color="#fff" stop-opacity="0.314"/><stop offset="0.75" stop-color="#fff" stop-opacity="0.157"/><stop offset="1.00" stop-color="#fff" stop-opacity="0.000"/></linearGradient><linearGradient id="o12" gradientUnits="userSpaceOnUse" x1="1152.9" y1="162.5" x2="1159.0" y2="97.5"><stop offset="0.00" stop-color="#fff" stop-opacity="1.000"/><stop offset="0.04" stop-color="#fff" stop-opacity="0.941"/><stop offset="0.10" stop-color="#fff" stop-opacity="0.859"/><stop offset="0.18" stop-color="#fff" stop-opacity="0.757"/><stop offset="0.28" stop-color="#fff" stop-opacity="0.635"/><stop offset="0.40" stop-color="#fff" stop-opacity="0.506"/><stop offset="0.55" stop-color="#fff" stop-opacity="0.357"/><stop offset="0.75" stop-color="#fff" stop-opacity="0.184"/><stop offset="1.00" stop-color="#fff" stop-opacity="0.000"/></linearGradient><linearGradient id="o13" gradientUnits="userSpaceOnUse" x1="1152.9" y1="162.5" x2="1159.0" y2="97.5"><stop offset="0.00" stop-color="#fff" stop-opacity="1.000"/><stop offset="0.04" stop-color="#fff" stop-opacity="0.949"/><stop offset="0.10" stop-color="#fff" stop-opacity="0.875"/><stop offset="0.18" stop-color="#fff" stop-opacity="0.776"/><stop offset="0.28" stop-color="#fff" stop-opacity="0.663"/><stop offset="0.40" stop-color="#fff" stop-opacity="0.533"/><stop offset="0.55" stop-color="#fff" stop-opacity="0.384"/><stop offset="0.75" stop-color="#fff" stop-opacity="0.204"/><stop offset="1.00" stop-color="#fff" stop-opacity="0.000"/></linearGradient><linearGradient id="o14" gradientUnits="userSpaceOnUse" x1="1152.9" y1="162.5" x2="1159.0" y2="97.5"><stop offset="0.00" stop-color="#fff" stop-opacity="1.000"/><stop offset="0.04" stop-color="#fff" stop-opacity="0.945"/><stop offset="0.10" stop-color="#fff" stop-opacity="0.863"/><stop offset="0.18" stop-color="#fff" stop-opacity="0.761"/><stop offset="0.28" stop-color="#fff" stop-opacity="0.643"/><stop offset="0.40" stop-color="#fff" stop-opacity="0.514"/><stop offset="0.55" stop-color="#fff" stop-opacity="0.365"/><stop offset="0.75" stop-color="#fff" stop-opacity="0.192"/><stop offset="1.00" stop-color="#fff" stop-opacity="0.000"/></linearGradient><linearGradient id="o15" gradientUnits="userSpaceOnUse" x1="1152.9" y1="162.5" x2="1159.0" y2="97.5"><stop offset="0.00" stop-color="#fff" stop-opacity="1.000"/><stop offset="0.04" stop-color="#fff" stop-opacity="0.941"/><stop offset="0.10" stop-color="#fff" stop-opacity="0.855"/><stop offset="0.18" stop-color="#fff" stop-opacity="0.749"/><stop offset="0.28" stop-color="#fff" stop-opacity="0.627"/><stop offset="0.40" stop-color="#fff" stop-opacity="0.498"/><stop offset="0.55" stop-color="#fff" stop-opacity="0.349"/><stop offset="0.75" stop-color="#fff" stop-opacity="0.180"/><stop offset="1.00" stop-color="#fff" stop-opacity="0.000"/></linearGradient><linearGradient id="o16" gradientUnits="userSpaceOnUse" x1="1152.9" y1="162.5" x2="1159.0" y2="97.5"><stop offset="0.00" stop-color="#fff" stop-opacity="1.000"/><stop offset="0.04" stop-color="#fff" stop-opacity="0.937"/><stop offset="0.10" stop-color="#fff" stop-opacity="0.847"/><stop offset="0.18" stop-color="#fff" stop-opacity="0.737"/><stop offset="0.28" stop-color="#fff" stop-opacity="0.612"/><stop offset="0.40" stop-color="#fff" stop-opacity="0.478"/><stop offset="0.55" stop-color="#fff" stop-opacity="0.333"/><stop offset="0.75" stop-color="#fff" stop-opacity="0.169"/><stop offset="1.00" stop-color="#fff" stop-opacity="0.000"/></linearGradient><linearGradient id="o17" gradientUnits="userSpaceOnUse" x1="1152.9" y1="162.5" x2="1093.6" y2="172.1"><stop offset="0.00" stop-color="#fff" stop-opacity="1.000"/><stop offset="0.04" stop-color="#fff" stop-opacity="0.937"/><stop offset="0.10" stop-color="#fff" stop-opacity="0.847"/><stop offset="0.18" stop-color="#fff" stop-opacity="0.737"/><stop offset="0.28" stop-color="#fff" stop-opacity="0.612"/><stop offset="0.40" stop-color="#fff" stop-opacity="0.478"/><stop offset="0.55" stop-color="#fff" stop-opacity="0.333"/><stop offset="0.75" stop-color="#fff" stop-opacity="0.169"/><stop offset="1.00" stop-color="#fff" stop-opacity="0.000"/></linearGradient><linearGradient id="o18" gradientUnits="userSpaceOnUse" x1="1152.9" y1="162.5" x2="1093.6" y2="172.1"><stop offset="0.00" stop-color="#fff" stop-opacity="1.000"/><stop offset="0.04" stop-color="#fff" stop-opacity="0.941"/><stop offset="0.10" stop-color="#fff" stop-opacity="0.855"/><stop offset="0.18" stop-color="#fff" stop-opacity="0.749"/><stop offset="0.28" stop-color="#fff" stop-opacity="0.627"/><stop offset="0.40" stop-color="#fff" stop-opacity="0.498"/><stop offset="0.55" stop-color="#fff" stop-opacity="0.349"/><stop offset="0.75" stop-color="#fff" stop-opacity="0.180"/><stop offset="1.00" stop-color="#fff" stop-opacity="0.000"/></linearGradient><linearGradient id="o19" gradientUnits="userSpaceOnUse" x1="1152.9" y1="162.5" x2="1093.6" y2="172.1"><stop offset="0.00" stop-color="#fff" stop-opacity="1.000"/><stop offset="0.04" stop-color="#fff" stop-opacity="0.945"/><stop offset="0.10" stop-color="#fff" stop-opacity="0.863"/><stop offset="0.18" stop-color="#fff" stop-opacity="0.761"/><stop offset="0.28" stop-color="#fff" stop-opacity="0.643"/><stop offset="0.40" stop-color="#fff" stop-opacity="0.514"/><stop offset="0.55" stop-color="#fff" stop-opacity="0.365"/><stop offset="0.75" stop-color="#fff" stop-opacity="0.192"/><stop offset="1.00" stop-color="#fff" stop-opacity="0.000"/></linearGradient><linearGradient id="o20" gradientUnits="userSpaceOnUse" x1="1152.9" y1="162.5" x2="1093.6" y2="172.1"><stop offset="0.00" stop-color="#fff" stop-opacity="1.000"/><stop offset="0.04" stop-color="#fff" stop-opacity="0.949"/><stop offset="0.10" stop-color="#fff" stop-opacity="0.871"/><stop offset="0.18" stop-color="#fff" stop-opacity="0.776"/><stop offset="0.28" stop-color="#fff" stop-opacity="0.663"/><stop offset="0.40" stop-color="#fff" stop-opacity="0.533"/><stop offset="0.55" stop-color="#fff" stop-opacity="0.384"/><stop offset="0.75" stop-color="#fff" stop-opacity="0.204"/><stop offset="1.00" stop-color="#fff" stop-opacity="0.000"/></linearGradient><linearGradient id="o21" gradientUnits="userSpaceOnUse" x1="1152.9" y1="162.5" x2="1093.6" y2="172.1"><stop offset="0.00" stop-color="#fff" stop-opacity="1.000"/><stop offset="0.04" stop-color="#fff" stop-opacity="0.949"/><stop offset="0.10" stop-color="#fff" stop-opacity="0.871"/><stop offset="0.18" stop-color="#fff" stop-opacity="0.776"/><stop offset="0.28" stop-color="#fff" stop-opacity="0.663"/><stop offset="0.40" stop-color="#fff" stop-opacity="0.533"/><stop offset="0.55" stop-color="#fff" stop-opacity="0.384"/><stop offset="0.75" stop-color="#fff" stop-opacity="0.204"/><stop offset="1.00" stop-color="#fff" stop-opacity="0.000"/></linearGradient><linearGradient id="o22" gradientUnits="userSpaceOnUse" x1="1152.9" y1="162.5" x2="1093.6" y2="172.1"><stop offset="0.00" stop-color="#fff" stop-opacity="1.000"/><stop offset="0.04" stop-color="#fff" stop-opacity="0.937"/><stop offset="0.10" stop-color="#fff" stop-opacity="0.847"/><stop offset="0.18" stop-color="#fff" stop-opacity="0.741"/><stop offset="0.28" stop-color="#fff" stop-opacity="0.616"/><stop offset="0.40" stop-color="#fff" stop-opacity="0.482"/><stop offset="0.55" stop-color="#fff" stop-opacity="0.337"/><stop offset="0.75" stop-color="#fff" stop-opacity="0.173"/><stop offset="1.00" stop-color="#fff" stop-opacity="0.000"/></linearGradient><linearGradient id="o23" gradientUnits="userSpaceOnUse" x1="1152.9" y1="162.5" x2="1093.6" y2="172.1"><stop offset="0.00" stop-color="#fff" stop-opacity="1.000"/><stop offset="0.04" stop-color="#fff" stop-opacity="0.925"/><stop offset="0.10" stop-color="#fff" stop-opacity="0.827"/><stop offset="0.18" stop-color="#fff" stop-opacity="0.706"/><stop offset="0.28" stop-color="#fff" stop-opacity="0.576"/><stop offset="0.40" stop-color="#fff" stop-opacity="0.443"/><stop offset="0.55" stop-color="#fff" stop-opacity="0.302"/><stop offset="0.75" stop-color="#fff" stop-opacity="0.149"/><stop offset="1.00" stop-color="#fff" stop-opacity="0.000"/></linearGradient><linearGradient id="o24" gradientUnits="userSpaceOnUse" x1="1152.9" y1="162.5" x2="1093.6" y2="172.1"><stop offset="0.00" stop-color="#fff" stop-opacity="1.000"/><stop offset="0.04" stop-color="#fff" stop-opacity="0.918"/><stop offset="0.10" stop-color="#fff" stop-opacity="0.804"/><stop offset="0.18" stop-color="#fff" stop-opacity="0.675"/><stop offset="0.28" stop-color="#fff" stop-opacity="0.541"/><stop offset="0.40" stop-color="#fff" stop-opacity="0.408"/><stop offset="0.55" stop-color="#fff" stop-opacity="0.271"/><stop offset="0.75" stop-color="#fff" stop-opacity="0.133"/><stop offset="1.00" stop-color="#fff" stop-opacity="0.000"/></linearGradient><linearGradient id="o25" gradientUnits="userSpaceOnUse" x1="1152.9" y1="162.5" x2="1093.6" y2="172.1"><stop offset="0.00" stop-color="#fff" stop-opacity="1.000"/><stop offset="0.04" stop-color="#fff" stop-opacity="0.906"/><stop offset="0.10" stop-color="#fff" stop-opacity="0.784"/><stop offset="0.18" stop-color="#fff" stop-opacity="0.647"/><stop offset="0.28" stop-color="#fff" stop-opacity="0.510"/><stop offset="0.40" stop-color="#fff" stop-opacity="0.376"/><stop offset="0.55" stop-color="#fff" stop-opacity="0.247"/><stop offset="0.75" stop-color="#fff" stop-opacity="0.118"/><stop offset="1.00" stop-color="#fff" stop-opacity="0.000"/></linearGradient><linearGradient id="o26" gradientUnits="userSpaceOnUse" x1="1152.9" y1="162.5" x2="1093.6" y2="172.1"><stop offset="0.00" stop-color="#fff" stop-opacity="1.000"/><stop offset="0.04" stop-color="#fff" stop-opacity="0.898"/><stop offset="0.10" stop-color="#fff" stop-opacity="0.765"/><stop offset="0.18" stop-color="#fff" stop-opacity="0.620"/><stop offset="0.28" stop-color="#fff" stop-opacity="0.482"/><stop offset="0.40" stop-color="#fff" stop-opacity="0.349"/><stop offset="0.55" stop-color="#fff" stop-opacity="0.227"/><stop offset="0.75" stop-color="#fff" stop-opacity="0.106"/><stop offset="1.00" stop-color="#fff" stop-opacity="0.000"/></linearGradient><linearGradient id="o27" gradientUnits="userSpaceOnUse" x1="1152.9" y1="162.5" x2="1093.6" y2="172.1"><stop offset="0.00" stop-color="#fff" stop-opacity="1.000"/><stop offset="0.04" stop-color="#fff" stop-opacity="0.886"/><stop offset="0.10" stop-color="#fff" stop-opacity="0.745"/><stop offset="0.18" stop-color="#fff" stop-opacity="0.596"/><stop offset="0.28" stop-color="#fff" stop-opacity="0.455"/><stop offset="0.40" stop-color="#fff" stop-opacity="0.329"/><stop offset="0.55" stop-color="#fff" stop-opacity="0.212"/><stop offset="0.75" stop-color="#fff" stop-opacity="0.098"/><stop offset="1.00" stop-color="#fff" stop-opacity="0.000"/></linearGradient><linearGradient id="o28" gradientUnits="userSpaceOnUse" x1="1152.9" y1="162.5" x2="1093.6" y2="172.1"><stop offset="0.00" stop-color="#fff" stop-opacity="1.000"/><stop offset="0.04" stop-color="#fff" stop-opacity="0.878"/><stop offset="0.10" stop-color="#fff" stop-opacity="0.729"/><stop offset="0.18" stop-color="#fff" stop-opacity="0.576"/><stop offset="0.28" stop-color="#fff" stop-opacity="0.435"/><stop offset="0.40" stop-color="#fff" stop-opacity="0.310"/><stop offset="0.55" stop-color="#fff" stop-opacity="0.196"/><stop offset="0.75" stop-color="#fff" stop-opacity="0.090"/><stop offset="1.00" stop-color="#fff" stop-opacity="0.000"/></linearGradient><linearGradient id="o29" gradientUnits="userSpaceOnUse" x1="1152.9" y1="162.5" x2="1093.6" y2="172.1"><stop offset="0.00" stop-color="#fff" stop-opacity="1.000"/><stop offset="0.04" stop-color="#fff" stop-opacity="0.867"/><stop offset="0.10" stop-color="#fff" stop-opacity="0.710"/><stop offset="0.18" stop-color="#fff" stop-opacity="0.557"/><stop offset="0.28" stop-color="#fff" stop-opacity="0.412"/><stop offset="0.40" stop-color="#fff" stop-opacity="0.290"/><stop offset="0.55" stop-color="#fff" stop-opacity="0.184"/><stop offset="0.75" stop-color="#fff" stop-opacity="0.082"/><stop offset="1.00" stop-color="#fff" stop-opacity="0.000"/></linearGradient><linearGradient id="o30" gradientUnits="userSpaceOnUse" x1="1152.9" y1="162.5" x2="1093.6" y2="172.1"><stop offset="0.00" stop-color="#fff" stop-opacity="1.000"/><stop offset="0.04" stop-color="#fff" stop-opacity="0.859"/><stop offset="0.10" stop-color="#fff" stop-opacity="0.694"/><stop offset="0.18" stop-color="#fff" stop-opacity="0.537"/><stop offset="0.28" stop-color="#fff" stop-opacity="0.396"/><stop offset="0.40" stop-color="#fff" stop-opacity="0.275"/><stop offset="0.55" stop-color="#fff" stop-opacity="0.173"/><stop offset="0.75" stop-color="#fff" stop-opacity="0.078"/><stop offset="1.00" stop-color="#fff" stop-opacity="0.000"/></linearGradient><linearGradient id="o31" gradientUnits="userSpaceOnUse" x1="1152.9" y1="162.5" x2="1093.6" y2="172.1"><stop offset="0.00" stop-color="#fff" stop-opacity="1.000"/><stop offset="0.04" stop-color="#fff" stop-opacity="0.851"/><stop offset="0.10" stop-color="#fff" stop-opacity="0.678"/><stop offset="0.18" stop-color="#fff" stop-opacity="0.518"/><stop offset="0.28" stop-color="#fff" stop-opacity="0.376"/><stop offset="0.40" stop-color="#fff" stop-opacity="0.263"/><stop offset="0.55" stop-color="#fff" stop-opacity="0.161"/><stop offset="0.75" stop-color="#fff" stop-opacity="0.075"/><stop offset="1.00" stop-color="#fff" stop-opacity="0.000"/></linearGradient><linearGradient id="o32" gradientUnits="userSpaceOnUse" x1="1152.9" y1="162.5" x2="1093.6" y2="172.1"><stop offset="0.00" stop-color="#fff" stop-opacity="1.000"/><stop offset="0.04" stop-color="#fff" stop-opacity="0.843"/><stop offset="0.10" stop-color="#fff" stop-opacity="0.667"/><stop offset="0.18" stop-color="#fff" stop-opacity="0.502"/><stop offset="0.28" stop-color="#fff" stop-opacity="0.361"/><stop offset="0.40" stop-color="#fff" stop-opacity="0.247"/><stop offset="0.55" stop-color="#fff" stop-opacity="0.153"/><stop offset="0.75" stop-color="#fff" stop-opacity="0.067"/><stop offset="1.00" stop-color="#fff" stop-opacity="0.000"/></linearGradient><linearGradient id="o33" gradientUnits="userSpaceOnUse" x1="1152.9" y1="162.5" x2="1260.8" y2="268.0"><stop offset="0.00" stop-color="#fff" stop-opacity="1.000"/><stop offset="0.04" stop-color="#fff" stop-opacity="0.843"/><stop offset="0.10" stop-color="#fff" stop-opacity="0.667"/><stop offset="0.18" stop-color="#fff" stop-opacity="0.502"/><stop offset="0.28" stop-color="#fff" stop-opacity="0.361"/><stop offset="0.40" stop-color="#fff" stop-opacity="0.247"/><stop offset="0.55" stop-color="#fff" stop-opacity="0.153"/><stop offset="0.75" stop-color="#fff" stop-opacity="0.067"/><stop offset="1.00" stop-color="#fff" stop-opacity="0.000"/></linearGradient><linearGradient id="o34" gradientUnits="userSpaceOnUse" x1="1152.9" y1="162.5" x2="1260.8" y2="268.0"><stop offset="0.00" stop-color="#fff" stop-opacity="1.000"/><stop offset="0.04" stop-color="#fff" stop-opacity="0.851"/><stop offset="0.10" stop-color="#fff" stop-opacity="0.678"/><stop offset="0.18" stop-color="#fff" stop-opacity="0.518"/><stop offset="0.28" stop-color="#fff" stop-opacity="0.376"/><stop offset="0.40" stop-color="#fff" stop-opacity="0.263"/><stop offset="0.55" stop-color="#fff" stop-opacity="0.161"/><stop offset="0.75" stop-color="#fff" stop-opacity="0.075"/><stop offset="1.00" stop-color="#fff" stop-opacity="0.000"/></linearGradient><linearGradient id="o35" gradientUnits="userSpaceOnUse" x1="1152.9" y1="162.5" x2="1260.8" y2="268.0"><stop offset="0.00" stop-color="#fff" stop-opacity="1.000"/><stop offset="0.04" stop-color="#fff" stop-opacity="0.859"/><stop offset="0.10" stop-color="#fff" stop-opacity="0.694"/><stop offset="0.18" stop-color="#fff" stop-opacity="0.537"/><stop offset="0.28" stop-color="#fff" stop-opacity="0.396"/><stop offset="0.40" stop-color="#fff" stop-opacity="0.275"/><stop offset="0.55" stop-color="#fff" stop-opacity="0.173"/><stop offset="0.75" stop-color="#fff" stop-opacity="0.078"/><stop offset="1.00" stop-color="#fff" stop-opacity="0.000"/></linearGradient><linearGradient id="o36" gradientUnits="userSpaceOnUse" x1="1152.9" y1="162.5" x2="1260.8" y2="268.0"><stop offset="0.00" stop-color="#fff" stop-opacity="1.000"/><stop offset="0.04" stop-color="#fff" stop-opacity="0.867"/><stop offset="0.10" stop-color="#fff" stop-opacity="0.710"/><stop offset="0.18" stop-color="#fff" stop-opacity="0.557"/><stop offset="0.28" stop-color="#fff" stop-opacity="0.412"/><stop offset="0.40" stop-color="#fff" stop-opacity="0.290"/><stop offset="0.55" stop-color="#fff" stop-opacity="0.184"/><stop offset="0.75" stop-color="#fff" stop-opacity="0.082"/><stop offset="1.00" stop-color="#fff" stop-opacity="0.000"/></linearGradient><linearGradient id="o37" gradientUnits="userSpaceOnUse" x1="1152.9" y1="162.5" x2="1260.8" y2="268.0"><stop offset="0.00" stop-color="#fff" stop-opacity="1.000"/><stop offset="0.04" stop-color="#fff" stop-opacity="0.878"/><stop offset="0.10" stop-color="#fff" stop-opacity="0.729"/><stop offset="0.18" stop-color="#fff" stop-opacity="0.576"/><stop offset="0.28" stop-color="#fff" stop-opacity="0.435"/><stop offset="0.40" stop-color="#fff" stop-opacity="0.310"/><stop offset="0.55" stop-color="#fff" stop-opacity="0.196"/><stop offset="0.75" stop-color="#fff" stop-opacity="0.090"/><stop offset="1.00" stop-color="#fff" stop-opacity="0.000"/></linearGradient><linearGradient id="o38" gradientUnits="userSpaceOnUse" x1="1152.9" y1="162.5" x2="1260.8" y2="268.0"><stop offset="0.00" stop-color="#fff" stop-opacity="1.000"/><stop offset="0.04" stop-color="#fff" stop-opacity="0.886"/><stop offset="0.10" stop-color="#fff" stop-opacity="0.745"/><stop offset="0.18" stop-color="#fff" stop-opacity="0.596"/><stop offset="0.28" stop-color="#fff" stop-opacity="0.455"/><stop offset="0.40" stop-color="#fff" stop-opacity="0.329"/><stop offset="0.55" stop-color="#fff" stop-opacity="0.212"/><stop offset="0.75" stop-color="#fff" stop-opacity="0.098"/><stop offset="1.00" stop-color="#fff" stop-opacity="0.000"/></linearGradient><linearGradient id="o39" gradientUnits="userSpaceOnUse" x1="1152.9" y1="162.5" x2="1260.8" y2="268.0"><stop offset="0.00" stop-color="#fff" stop-opacity="1.000"/><stop offset="0.04" stop-color="#fff" stop-opacity="0.898"/><stop offset="0.10" stop-color="#fff" stop-opacity="0.765"/><stop offset="0.18" stop-color="#fff" stop-opacity="0.624"/><stop offset="0.28" stop-color="#fff" stop-opacity="0.482"/><stop offset="0.40" stop-color="#fff" stop-opacity="0.353"/><stop offset="0.55" stop-color="#fff" stop-opacity="0.227"/><stop offset="0.75" stop-color="#fff" stop-opacity="0.106"/><stop offset="1.00" stop-color="#fff" stop-opacity="0.000"/></linearGradient><linearGradient id="o40" gradientUnits="userSpaceOnUse" x1="1152.9" y1="162.5" x2="1260.8" y2="268.0"><stop offset="0.00" stop-color="#fff" stop-opacity="1.000"/><stop offset="0.04" stop-color="#fff" stop-opacity="0.906"/><stop offset="0.10" stop-color="#fff" stop-opacity="0.784"/><stop offset="0.18" stop-color="#fff" stop-opacity="0.647"/><stop offset="0.28" stop-color="#fff" stop-opacity="0.510"/><stop offset="0.40" stop-color="#fff" stop-opacity="0.376"/><stop offset="0.55" stop-color="#fff" stop-opacity="0.247"/><stop offset="0.75" stop-color="#fff" stop-opacity="0.118"/><stop offset="1.00" stop-color="#fff" stop-opacity="0.000"/></linearGradient><linearGradient id="o41" gradientUnits="userSpaceOnUse" x1="1152.9" y1="162.5" x2="1260.8" y2="268.0"><stop offset="0.00" stop-color="#fff" stop-opacity="1.000"/><stop offset="0.04" stop-color="#fff" stop-opacity="0.898"/><stop offset="0.10" stop-color="#fff" stop-opacity="0.765"/><stop offset="0.18" stop-color="#fff" stop-opacity="0.620"/><stop offset="0.28" stop-color="#fff" stop-opacity="0.478"/><stop offset="0.40" stop-color="#fff" stop-opacity="0.349"/><stop offset="0.55" stop-color="#fff" stop-opacity="0.227"/><stop offset="0.75" stop-color="#fff" stop-opacity="0.106"/><stop offset="1.00" stop-color="#fff" stop-opacity="0.000"/></linearGradient><linearGradient id="o42" gradientUnits="userSpaceOnUse" x1="1152.9" y1="162.5" x2="1260.8" y2="268.0"><stop offset="0.00" stop-color="#fff" stop-opacity="1.000"/><stop offset="0.04" stop-color="#fff" stop-opacity="0.886"/><stop offset="0.10" stop-color="#fff" stop-opacity="0.741"/><stop offset="0.18" stop-color="#fff" stop-opacity="0.592"/><stop offset="0.28" stop-color="#fff" stop-opacity="0.451"/><stop offset="0.40" stop-color="#fff" stop-opacity="0.325"/><stop offset="0.55" stop-color="#fff" stop-opacity="0.208"/><stop offset="0.75" stop-color="#fff" stop-opacity="0.098"/><stop offset="1.00" stop-color="#fff" stop-opacity="0.000"/></linearGradient><linearGradient id="o43" gradientUnits="userSpaceOnUse" x1="1152.9" y1="162.5" x2="1260.8" y2="268.0"><stop offset="0.00" stop-color="#fff" stop-opacity="1.000"/><stop offset="0.04" stop-color="#fff" stop-opacity="0.875"/><stop offset="0.10" stop-color="#fff" stop-opacity="0.722"/><stop offset="0.18" stop-color="#fff" stop-opacity="0.569"/><stop offset="0.28" stop-color="#fff" stop-opacity="0.427"/><stop offset="0.40" stop-color="#fff" stop-opacity="0.302"/><stop offset="0.55" stop-color="#fff" stop-opacity="0.192"/><stop offset="0.75" stop-color="#fff" stop-opacity="0.090"/><stop offset="1.00" stop-color="#fff" stop-opacity="0.000"/></linearGradient><linearGradient id="o44" gradientUnits="userSpaceOnUse" x1="1152.9" y1="162.5" x2="1260.8" y2="268.0"><stop offset="0.00" stop-color="#fff" stop-opacity="1.000"/><stop offset="0.04" stop-color="#fff" stop-opacity="0.863"/><stop offset="0.10" stop-color="#fff" stop-opacity="0.706"/><stop offset="0.18" stop-color="#fff" stop-opacity="0.549"/><stop offset="0.28" stop-color="#fff" stop-opacity="0.404"/><stop offset="0.40" stop-color="#fff" stop-opacity="0.286"/><stop offset="0.55" stop-color="#fff" stop-opacity="0.176"/><stop offset="0.75" stop-color="#fff" stop-opacity="0.082"/><stop offset="1.00" stop-color="#fff" stop-opacity="0.000"/></linearGradient><linearGradient id="o45" gradientUnits="userSpaceOnUse" x1="1152.9" y1="162.5" x2="1260.8" y2="268.0"><stop offset="0.00" stop-color="#fff" stop-opacity="1.000"/><stop offset="0.04" stop-color="#fff" stop-opacity="0.855"/><stop offset="0.10" stop-color="#fff" stop-opacity="0.686"/><stop offset="0.18" stop-color="#fff" stop-opacity="0.525"/><stop offset="0.28" stop-color="#fff" stop-opacity="0.384"/><stop offset="0.40" stop-color="#fff" stop-opacity="0.267"/><stop offset="0.55" stop-color="#fff" stop-opacity="0.165"/><stop offset="0.75" stop-color="#fff" stop-opacity="0.075"/><stop offset="1.00" stop-color="#fff" stop-opacity="0.000"/></linearGradient><linearGradient id="o46" gradientUnits="userSpaceOnUse" x1="1152.9" y1="162.5" x2="1260.8" y2="268.0"><stop offset="0.00" stop-color="#fff" stop-opacity="1.000"/><stop offset="0.04" stop-color="#fff" stop-opacity="0.843"/><stop offset="0.10" stop-color="#fff" stop-opacity="0.671"/><stop offset="0.18" stop-color="#fff" stop-opacity="0.506"/><stop offset="0.28" stop-color="#fff" stop-opacity="0.369"/><stop offset="0.40" stop-color="#fff" stop-opacity="0.255"/><stop offset="0.55" stop-color="#fff" stop-opacity="0.157"/><stop offset="0.75" stop-color="#fff" stop-opacity="0.071"/><stop offset="1.00" stop-color="#fff" stop-opacity="0.000"/></linearGradient><linearGradient id="o47" gradientUnits="userSpaceOnUse" x1="1152.9" y1="162.5" x2="1260.8" y2="268.0"><stop offset="0.00" stop-color="#fff" stop-opacity="1.000"/><stop offset="0.04" stop-color="#fff" stop-opacity="0.835"/><stop offset="0.10" stop-color="#fff" stop-opacity="0.655"/><stop offset="0.18" stop-color="#fff" stop-opacity="0.490"/><stop offset="0.28" stop-color="#fff" stop-opacity="0.349"/><stop offset="0.40" stop-color="#fff" stop-opacity="0.239"/><stop offset="0.55" stop-color="#fff" stop-opacity="0.145"/><stop offset="0.75" stop-color="#fff" stop-opacity="0.067"/><stop offset="1.00" stop-color="#fff" stop-opacity="0.000"/></linearGradient><linearGradient id="o48" gradientUnits="userSpaceOnUse" x1="1152.9" y1="162.5" x2="1260.8" y2="268.0"><stop offset="0.00" stop-color="#fff" stop-opacity="1.000"/><stop offset="0.04" stop-color="#fff" stop-opacity="0.824"/><stop offset="0.10" stop-color="#fff" stop-opacity="0.639"/><stop offset="0.18" stop-color="#fff" stop-opacity="0.475"/><stop offset="0.28" stop-color="#fff" stop-opacity="0.337"/><stop offset="0.40" stop-color="#fff" stop-opacity="0.227"/><stop offset="0.55" stop-color="#fff" stop-opacity="0.137"/><stop offset="0.75" stop-color="#fff" stop-opacity="0.063"/><stop offset="1.00" stop-color="#fff" stop-opacity="0.000"/></linearGradient></defs>
<foreignObject x="955.7" y="60.6" width="599.9" height="461.9"><div style="width:599.9px;height:461.9px;background:conic-gradient(from 0deg at 197.2px 101.9px,#879e00 0deg,#8f9e00 1.0deg,#989e00 3.5deg,#9e9c00 6.0deg,#9e9300 8.6deg,#9e8c00 11.2deg,#9e8500 13.8deg,#9e7e00 16.4deg,#9e7700 19.0deg,#9e7100 21.5deg,#9e6c00 24.1deg,#9e6600 26.6deg,#9e6100 29.0deg,#9e5d00 31.4deg,#9e5800 33.7deg,#9e5400 36.0deg,#9e5000 38.1deg,#9e4c00 40.2deg,#9e4800 42.2deg,#9e4500 44.2deg,#9e4100 46.1deg,#9e3e00 47.8deg,#9e3b00 49.5deg,#9e3800 51.2deg,#9e3500 52.7deg,#9e3300 54.2deg,#9e3000 55.6deg,#9e2e00 57.0deg,#9e2b00 58.2deg,#9e2900 59.5deg,#9e2700 60.6deg,#9e2500 61.7deg,#9e2300 62.8deg,#9e2100 63.8deg,#9e1f00 64.7deg,#9e1d00 65.7deg,#9e1c00 66.5deg,#9e1a00 67.4deg,#9e1800 68.1deg,#9e1700 68.9deg,#9e1500 69.6deg,#9e1400 70.3deg,#9e1300 70.9deg,#9e1200 71.5deg,#9e1000 72.1deg,#9e0f00 72.7deg,#9e0e00 73.2deg,#9e0d00 73.7deg,#9e0c00 74.2deg,#9e0b00 74.6deg,#9e0a00 75.1deg,#9e0900 75.5deg,#9e0800 75.9deg,#9e0600 76.7deg,#9e0500 77.4deg,#9e0300 78.1deg,#9e0200 78.6deg,#9e0100 79.2deg,#9e0000 79.7deg,#9e0000 80.1deg,#9e0000 80.5deg,#9e0000 81.1deg,#9e0000 81.6deg,#9e0000 82.0deg,#9e0000 82.5deg,#9e0000 83.0deg,#9e0000 83.6deg,#9e0000 84.1deg,#9e0000 84.6deg,#9e0000 85.0deg,#9e0000 85.4deg,#9e0000 85.9deg,#9e0000 86.4deg,#9e0001 86.8deg,#9e0002 87.3deg,#9e0003 87.7deg,#9e0004 88.1deg,#9e0005 88.5deg,#9e0006 89.0deg,#9e0008 89.4deg,#9e0009 89.8deg,#9e000a 90.3deg,#9e000b 90.8deg,#9e000c 91.2deg,#9e000e 91.7deg,#9e000f 92.2deg,#9e0010 92.7deg,#9e0011 93.2deg,#9e0013 93.7deg,#9e0014 94.2deg,#9e0015 94.7deg,#9e0017 95.3deg,#9e0018 95.8deg,#9e001a 96.3deg,#9e001b 96.9deg,#9e001d 97.5deg,#9e001e 98.0deg,#9e0020 98.6deg,#9e0021 99.2deg,#9e0023 99.8deg,#9e0024 100.4deg,#9e0026 101.0deg,#9e0028 101.6deg,#9e0029 102.3deg,#9e002b 102.9deg,#9e002d 103.6deg,#9e002f 104.2deg,#9e0031 104.9deg,#9e0032 105.6deg,#9e0034 106.2deg,#9e0036 106.9deg,#9e0038 107.6deg,#9e003a 108.4deg,#9e003c 109.1deg,#9e003f 109.8deg,#9e0041 110.5deg,#9e0043 111.3deg,#9e0045 112.0deg,#9e0048 112.8deg,#9e004a 113.6deg,#9e004c 114.3deg,#9e004f 115.1deg,#9e0051 115.9deg,#9e0054 116.7deg,#9e0057 117.5deg,#9e0059 118.3deg,#9e005c 119.2deg,#9e005f 120.0deg,#9e0062 120.8deg,#9e0065 121.7deg,#9e0068 122.5deg,#9e006b 123.3deg,#9e006e 124.2deg,#9e0072 125.1deg,#9e0075 125.9deg,#9e0079 126.8deg,#9e007c 127.7deg,#9e0080 128.5deg,#9e0084 129.4deg,#9e0088 130.3deg,#9e008c 131.2deg,#9e0090 132.0deg,#9e0094 132.9deg,#9e0098 133.8deg,#9e009d 134.7deg,#9b009e 135.6deg,#96009e 136.4deg,#92009e 137.3deg,#8e009e 138.2deg,#89009e 139.1deg,#85009e 140.0deg,#81009e 140.8deg,#7e009e 141.7deg,#7a009e 142.6deg,#76009e 143.4deg,#73009e 144.3deg,#6f009e 145.1deg,#6c009e 146.0deg,#69009e 146.8deg,#65009e 147.7deg,#62009e 148.5deg,#5f009e 149.3deg,#5c009e 150.1deg,#59009e 150.9deg,#56009e 151.8deg,#53009e 152.6deg,#51009e 153.3deg,#4e009e 154.1deg,#4b009e 154.9deg,#49009e 155.7deg,#46009e 156.4deg,#44009e 157.2deg,#41009e 157.9deg,#3f009e 158.7deg,#3c009e 159.4deg,#3a009e 160.1deg,#38009e 160.8deg,#36009e 161.5deg,#33009e 162.2deg,#31009e 162.9deg,#2f009e 163.6deg,#2d009e 164.2deg,#2b009e 164.9deg,#29009e 165.5deg,#27009e 166.2deg,#25009e 166.8deg,#23009e 167.4deg,#22009e 168.0deg,#20009e 168.6deg,#1e009e 169.2deg,#1c009e 169.8deg,#1b009e 170.4deg,#19009e 170.8deg,#18009e 171.2deg,#17009e 171.7deg,#16009e 172.2deg,#15009e 172.7deg,#14009e 173.2deg,#13009e 173.7deg,#11009e 174.4deg,#10009e 175.2deg,#0f009e 175.6deg,#0e009e 176.0deg,#0c009e 176.7deg,#0b009e 177.3deg,#0a009e 177.9deg,#09009e 178.4deg,#08009e 179.0deg,#06009e 179.6deg,#05009e 180.4deg,#03009e 181.1deg,#02009e 181.5deg,#02009e 182.0deg,#01009e 182.4deg,#00009e 182.9deg,#00009e 183.3deg,#00009e 183.8deg,#00009e 184.3deg,#00009e 184.8deg,#00009e 185.4deg,#00009e 186.0deg,#00009e 186.6deg,#00009e 187.3deg,#00009e 188.1deg,#00009e 188.8deg,#00019e 189.7deg,#00029e 190.5deg,#00039e 191.4deg,#00049e 192.4deg,#00059e 193.4deg,#00079e 194.5deg,#00089e 195.6deg,#000a9e 196.8deg,#000b9e 198.0deg,#000d9e 199.4deg,#000f9e 200.8deg,#00119e 202.2deg,#00139e 203.8deg,#00159e 205.4deg,#00189e 207.1deg,#001a9e 209.0deg,#001d9e 210.9deg,#00209e 212.9deg,#00239e 214.9deg,#00269e 217.1deg,#002a9e 219.3deg,#002d9e 221.6deg,#00319e 223.9deg,#00359e 226.4deg,#003a9e 228.9deg,#003f9e 231.4deg,#00449e 233.9deg,#00499e 236.4deg,#004f9e 238.9deg,#00559e 241.4deg,#005c9e 243.8deg,#00639e 246.3deg,#006a9e 248.7deg,#00739e 251.1deg,#007b9e 253.4deg,#00859e 255.6deg,#008f9e 257.7deg,#00999e 259.7deg,#009e97 261.7deg,#009e8d 263.6deg,#009e83 265.4deg,#009e79 267.2deg,#009e71 268.8deg,#009e69 270.4deg,#009e61 271.8deg,#009e5a 273.2deg,#009e54 274.5deg,#009e4e 275.7deg,#009e48 276.9deg,#009e43 278.0deg,#009e3e 279.1deg,#009e39 280.1deg,#009e35 281.0deg,#009e31 281.9deg,#009e2d 282.7deg,#009e29 283.5deg,#009e26 284.3deg,#009e23 285.0deg,#009e20 285.7deg,#009e1d 286.4deg,#009e1a 287.0deg,#009e18 287.6deg,#009e15 288.2deg,#009e13 288.8deg,#009e11 289.3deg,#009e0f 289.9deg,#009e0d 290.4deg,#009e0b 290.9deg,#009e09 291.3deg,#009e07 291.8deg,#009e06 292.3deg,#009e04 292.7deg,#009e03 293.1deg,#009e02 293.5deg,#009e00 294.3deg,#009e00 295.0deg,#009e00 295.7deg,#009e00 296.3deg,#009e00 297.0deg,#009e00 297.6deg,#009e00 298.2deg,#009e00 298.7deg,#009e00 299.3deg,#009e00 299.9deg,#009e00 300.5deg,#009e00 301.1deg,#009e00 301.7deg,#009e00 302.3deg,#009e00 303.0deg,#009e00 303.6deg,#009e00 304.3deg,#009e00 305.0deg,#009e00 305.8deg,#009e00 306.5deg,#009e00 307.3deg,#009e00 307.7deg,#009e00 308.2deg,#009e00 308.6deg,#009e00 309.1deg,#009e00 309.5deg,#009e00 310.0deg,#009e00 310.5deg,#009e00 311.0deg,#009e00 311.6deg,#009e00 312.1deg,#009e00 312.7deg,#009e00 313.3deg,#009e00 313.9deg,#009e00 314.5deg,#009e00 315.2deg,#009e00 315.9deg,#009e00 316.6deg,#009e00 317.3deg,#009e00 318.1deg,#009e00 318.9deg,#039e00 319.7deg,#069e00 320.6deg,#0a9e00 321.5deg,#0e9e00 322.4deg,#129e00 323.4deg,#169e00 324.5deg,#1a9e00 325.6deg,#1e9e00 326.7deg,#229e00 327.9deg,#279e00 329.1deg,#2c9e00 330.4deg,#309e00 331.8deg,#359e00 333.3deg,#3a9e00 334.8deg,#409e00 336.3deg,#459e00 338.0deg,#4b9e00 339.7deg,#519e00 341.5deg,#579e00 343.3deg,#5d9e00 345.3deg,#639e00 347.3deg,#6a9e00 349.4deg,#719e00 351.6deg,#789e00 353.9deg,#809e00 356.2deg,#879e00 358.6deg,#8f9e00 360deg);clip-path:polygon(256.0px 449.1px,255.9px 449.2px,255.7px 449.3px,255.4px 449.5px,255.2px 449.6px,254.9px 449.7px,254.7px 449.7px,254.5px 449.7px,254.3px 449.7px,254.1px 449.7px,253.8px 449.7px,253.4px 449.6px,253.1px 449.6px,252.7px 449.5px,252.2px 449.3px,251.5px 448.9px,250.6px 448.4px,249.5px 447.7px,248.4px 446.8px,247.0px 445.8px,245.4px 444.5px,243.6px 443.0px,241.6px 441.3px,239.3px 439.5px,236.8px 437.3px,234.0px 435.0px,230.6px 432.2px,226.8px 429.1px,222.8px 425.7px,218.9px 422.5px,215.4px 419.7px,212.5px 417.3px,210.1px 415.2px,207.7px 413.3px,205.4px 411.3px,202.7px 409.0px,199.9px 406.5px,196.9px 403.9px,193.7px 401.1px,190.5px 398.1px,187.2px 394.9px,183.7px 391.6px,180.2px 388.2px,176.5px 384.5px,172.6px 380.4px,168.5px 375.8px,164.0px 370.7px,159.2px 365.2px,154.2px 359.2px,149.0px 352.7px,143.6px 345.8px,138.1px 338.5px,132.4px 330.7px,126.5px 322.5px,120.4px 313.8px,114.3px 304.8px,108.1px 295.3px,101.8px 285.3px,95.3px 274.9px,88.9px 264.4px,82.6px 253.7px,76.3px 242.9px,69.9px 231.8px,63.7px 220.6px,57.6px 209.4px,52.0px 198.5px,46.6px 187.6px,41.6px 176.7px,36.8px 166.0px,32.3px 155.5px,28.1px 145.4px,24.2px 135.8px,20.7px 126.4px,17.4px 117.4px,14.5px 108.8px,11.9px 100.7px,9.6px 93.2px,7.6px 86.1px,6.0px 79.5px,4.6px 73.3px,3.5px 67.5px,2.6px 62.1px,1.9px 57.2px,1.6px 52.6px,1.4px 48.4px,1.4px 44.4px,1.7px 40.6px,2.1px 37.2px,2.8px 34.1px,3.6px 31.2px,4.6px 28.5px,5.8px 26.0px,7.2px 23.8px,8.8px 21.8px,10.4px 20.0px,12.2px 18.4px,14.2px 17.0px,16.2px 15.8px,18.4px 14.8px,20.7px 14.0px,23.0px 13.2px,25.5px 12.6px,28.0px 12.2px,30.6px 11.8px,33.2px 11.6px,35.9px 11.3px,38.6px 11.1px,41.4px 11.0px,44.2px 10.9px,47.1px 10.9px,49.9px 10.9px,52.7px 10.8px,55.6px 10.9px,58.4px 10.9px,61.3px 11.0px,64.1px 11.0px,67.1px 11.1px,70.0px 11.3px,72.9px 11.4px,75.9px 11.6px,79.0px 11.7px,82.1px 11.9px,85.2px 12.1px,88.4px 12.4px,91.7px 12.6px,95.0px 12.9px,98.3px 13.2px,101.8px 13.5px,105.2px 13.8px,108.8px 14.1px,112.4px 14.5px,116.0px 14.8px,119.8px 15.2px,123.6px 15.6px,127.5px 16.0px,131.5px 16.4px,135.5px 16.8px,139.7px 17.3px,143.9px 17.7px,148.2px 18.2px,152.6px 18.7px,157.1px 19.2px,161.7px 19.7px,166.4px 20.2px,171.2px 20.7px,176.1px 21.3px,181.0px 21.9px,186.1px 22.4px,191.3px 23.0px,196.6px 23.6px,202.0px 24.2px,207.5px 24.9px,213.1px 25.5px,218.8px 26.2px,224.6px 26.8px,230.5px 27.5px,236.5px 28.2px,242.6px 28.9px,248.8px 29.6px,255.1px 30.3px,261.6px 31.1px,268.1px 31.8px,274.7px 32.6px,281.4px 33.4px,288.2px 34.2px,295.1px 35.0px,302.0px 35.8px,309.1px 36.6px,316.2px 37.4px,323.3px 38.2px,330.5px 39.0px,337.8px 39.9px,345.1px 40.7px,352.4px 41.6px,359.7px 42.4px,367.0px 43.2px,374.1px 44.1px,381.2px 44.9px,388.3px 45.7px,395.3px 46.5px,402.3px 47.3px,409.2px 48.1px,416.2px 48.9px,423.2px 49.7px,430.0px 50.5px,436.6px 51.3px,443.1px 52.0px,449.5px 52.7px,455.7px 53.5px,461.8px 54.1px,467.8px 54.8px,473.6px 55.5px,479.2px 56.1px,484.7px 56.8px,490.1px 57.4px,495.3px 58.0px,500.0px 58.6px,504.3px 59.1px,508.6px 59.6px,513.3px 60.1px,518.7px 60.7px,525.3px 61.5px,532.7px 62.3px,540.5px 63.2px,548.0px 64.1px,554.8px 64.9px,560.9px 65.6px,566.5px 66.2px,571.8px 66.8px,576.7px 67.4px,581.3px 67.9px,585.5px 68.4px,589.2px 68.8px,592.7px 69.2px,595.8px 69.6px,598.7px 69.9px,601.2px 70.2px,603.4px 70.5px,605.3px 70.7px,607.2px 70.9px,609.0px 71.1px,611.0px 71.3px,613.0px 71.6px,614.9px 71.8px,616.6px 72.0px,618.0px 72.2px,619.1px 72.3px,620.0px 72.4px,620.6px 72.5px,621.1px 72.5px,621.5px 72.6px,603.2px 91.4px,585.0px 110.2px,566.7px 129.0px,548.4px 147.9px,530.2px 166.7px,511.9px 185.5px,493.6px 204.4px,475.3px 223.2px,457.1px 242.0px,438.8px 260.9px,420.5px 279.7px,402.2px 298.5px,384.0px 317.3px,365.7px 336.2px,347.4px 355.0px,329.1px 373.8px,310.9px 392.7px,292.6px 411.5px,274.3px 430.3px)"></div></foreignObject>
<foreignObject x="955.7" y="60.6" width="599.9" height="461.9"><div style="width:599.9px;height:461.9px;background:conic-gradient(from 0deg at 197.2px 101.9px,#e2ff00 0deg,#e7ff00 0.4deg,#edff00 1.6deg,#f3ff00 2.8deg,#f8ff00 4.0deg,#feff00 5.2deg,#fffa00 6.3deg,#fff500 7.5deg,#ffef00 8.7deg,#ffea00 9.9deg,#ffe500 11.1deg,#ffe000 12.3deg,#ffdc00 13.4deg,#ffd700 14.6deg,#ffd300 15.8deg,#ffce00 16.9deg,#ffca00 18.1deg,#ffc600 19.2deg,#ffc200 20.3deg,#ffbe00 21.4deg,#ffbb00 22.5deg,#ffb700 23.6deg,#ffb300 24.7deg,#ffb000 25.7deg,#ffad00 26.8deg,#ffa900 27.8deg,#ffa600 28.8deg,#ffa300 29.8deg,#ffa000 30.8deg,#ff9d00 31.7deg,#ff9a00 32.7deg,#ff9800 33.6deg,#ff9500 34.5deg,#ff9200 35.4deg,#ff8f00 36.3deg,#ff8d00 37.2deg,#ff8a00 38.0deg,#ff8800 38.9deg,#ff8600 39.7deg,#ff8300 40.5deg,#ff8100 41.3deg,#ff7f00 42.1deg,#ff7d00 42.8deg,#ff7a00 43.6deg,#ff7800 44.3deg,#ff7600 45.0deg,#ff7400 45.7deg,#ff7200 46.4deg,#ff7000 47.1deg,#ff6e00 47.7deg,#ff6d00 48.4deg,#ff6b00 49.0deg,#ff6900 49.6deg,#ff6700 50.2deg,#ff6500 50.8deg,#ff6400 51.4deg,#ff6200 52.0deg,#ff6000 52.5deg,#ff5f00 53.1deg,#ff5d00 53.6deg,#ff5c00 54.1deg,#ff5a00 54.6deg,#ff5900 55.1deg,#ff5600 56.1deg,#ff5300 57.0deg,#ff5000 57.9deg,#ff4e00 58.8deg,#ff4b00 59.6deg,#ff4900 60.4deg,#ff4600 61.2deg,#ff4400 61.9deg,#ff4200 62.7deg,#ff3f00 63.3deg,#ff3d00 64.0deg,#ff3b00 64.6deg,#ff3900 65.2deg,#ff3700 65.8deg,#ff3500 66.4deg,#ff3400 66.9deg,#ff3200 67.5deg,#ff3000 68.0deg,#ff2e00 68.7deg,#ff2b00 69.4deg,#ff2900 70.1deg,#ff2700 70.7deg,#ff2400 71.3deg,#ff2200 71.9deg,#ff2000 72.5deg,#ff1e00 73.0deg,#ff1c00 73.5deg,#ff1a00 74.1deg,#ff1800 74.8deg,#ff1500 75.3deg,#ff1300 75.9deg,#ff1100 76.4deg,#ff0f00 77.0deg,#ff0d00 77.6deg,#ff0a00 78.1deg,#ff0800 78.6deg,#ff0600 79.2deg,#ff0400 79.7deg,#ff0100 80.2deg,#ff0001 80.8deg,#ff0004 81.4deg,#ff0007 82.1deg,#ff000a 82.8deg,#ff000d 83.6deg,#ff000f 84.1deg,#ff0011 84.6deg,#ff0014 85.1deg,#ff0016 85.6deg,#ff0018 86.2deg,#ff001a 86.7deg,#ff001d 87.3deg,#ff001f 87.9deg,#ff0022 88.5deg,#ff0024 89.1deg,#ff0027 89.7deg,#ff0029 90.4deg,#ff002c 91.0deg,#ff002f 91.7deg,#ff0032 92.3deg,#ff0034 93.0deg,#ff0037 93.7deg,#ff003a 94.5deg,#ff003d 95.2deg,#ff0040 96.0deg,#ff0043 96.7deg,#ff0047 97.5deg,#ff004a 98.3deg,#ff004d 99.1deg,#ff0051 100.0deg,#ff0054 100.8deg,#ff0058 101.7deg,#ff005c 102.6deg,#ff005f 103.5deg,#ff0063 104.4deg,#ff0067 105.4deg,#ff006b 106.3deg,#ff006f 107.3deg,#ff0074 108.3deg,#ff0076 108.8deg,#ff0078 109.3deg,#ff007a 109.8deg,#ff007c 110.3deg,#ff007f 110.9deg,#ff0081 111.4deg,#ff0083 111.9deg,#ff0086 112.4deg,#ff0088 113.0deg,#ff008b 113.5deg,#ff008d 114.1deg,#ff0090 114.6deg,#ff0092 115.2deg,#ff0095 115.7deg,#ff0097 116.3deg,#ff009a 116.8deg,#ff009d 117.4deg,#ff009f 118.0deg,#ff00a2 118.6deg,#ff00a5 119.1deg,#ff00a8 119.7deg,#ff00ab 120.3deg,#ff00ad 120.9deg,#ff00b0 121.5deg,#ff00b3 122.1deg,#ff00b7 122.6deg,#ff00ba 123.2deg,#ff00bd 123.8deg,#ff00c0 124.4deg,#ff00c3 125.0deg,#ff00c6 125.7deg,#ff00ca 126.3deg,#ff00cd 126.9deg,#ff00d1 127.5deg,#ff00d4 128.1deg,#ff00d8 128.7deg,#ff00db 129.3deg,#ff00df 129.9deg,#ff00e3 130.6deg,#ff00e7 131.2deg,#ff00eb 131.8deg,#ff00ee 132.4deg,#ff00f2 133.0deg,#ff00f7 133.7deg,#ff00fb 134.3deg,#ff00ff 134.9deg,#fb00ff 135.5deg,#f700ff 136.1deg,#f300ff 136.8deg,#ee00ff 137.4deg,#eb00ff 138.0deg,#e700ff 138.6deg,#e300ff 139.2deg,#df00ff 139.9deg,#db00ff 140.5deg,#d800ff 141.1deg,#d400ff 141.7deg,#d000ff 142.3deg,#cd00ff 142.9deg,#c900ff 143.5deg,#c600ff 144.1deg,#c200ff 144.7deg,#bf00ff 145.3deg,#bc00ff 145.9deg,#b900ff 146.5deg,#b500ff 147.1deg,#b200ff 147.7deg,#af00ff 148.3deg,#ac00ff 148.9deg,#a900ff 149.4deg,#a600ff 150.0deg,#a300ff 150.6deg,#a000ff 151.2deg,#9d00ff 151.7deg,#9a00ff 152.3deg,#9800ff 152.9deg,#9500ff 153.4deg,#9200ff 154.0deg,#8f00ff 154.5deg,#8d00ff 155.1deg,#8a00ff 155.6deg,#8700ff 156.1deg,#8500ff 156.7deg,#8200ff 157.2deg,#8000ff 157.7deg,#7d00ff 158.3deg,#7b00ff 158.8deg,#7800ff 159.3deg,#7600ff 159.8deg,#7400ff 160.3deg,#7100ff 160.8deg,#6d00ff 161.8deg,#6800ff 162.8deg,#6400ff 163.7deg,#6000ff 164.6deg,#5b00ff 165.6deg,#5700ff 166.5deg,#5300ff 167.3deg,#4f00ff 168.2deg,#4b00ff 169.1deg,#4800ff 169.9deg,#4400ff 170.7deg,#4000ff 171.5deg,#3d00ff 172.3deg,#3900ff 173.0deg,#3600ff 173.8deg,#3300ff 174.5deg,#2f00ff 175.2deg,#2c00ff 175.9deg,#2900ff 176.6deg,#2600ff 177.3deg,#2300ff 178.0deg,#2000ff 178.6deg,#1d00ff 179.2deg,#1a00ff 179.9deg,#1700ff 180.5deg,#1400ff 181.0deg,#1200ff 181.6deg,#0f00ff 182.2deg,#0c00ff 182.7deg,#0a00ff 183.3deg,#0700ff 183.8deg,#0500ff 184.3deg,#0200ff 184.8deg,#0000ff 185.4deg,#0003ff 186.0deg,#0006ff 186.5deg,#0008ff 187.1deg,#000bff 187.6deg,#000dff 188.2deg,#0010ff 188.7deg,#0012ff 189.3deg,#0015ff 189.9deg,#0017ff 190.4deg,#0019ff 191.0deg,#001cff 191.6deg,#001fff 192.2deg,#0021ff 192.8deg,#0023ff 193.3deg,#0025ff 193.8deg,#0027ff 194.4deg,#002aff 195.1deg,#002cff 195.7deg,#002fff 196.4deg,#0031ff 197.1deg,#0034ff 197.9deg,#0036ff 198.4deg,#0038ff 198.9deg,#003aff 199.5deg,#003cff 200.1deg,#003eff 200.7deg,#0040ff 201.3deg,#0043ff 202.0deg,#0045ff 202.7deg,#0047ff 203.4deg,#004aff 204.1deg,#004cff 204.9deg,#004fff 205.7deg,#0052ff 206.5deg,#0054ff 207.4deg,#0057ff 208.3deg,#005aff 209.2deg,#005dff 210.2deg,#005fff 210.7deg,#0060ff 211.3deg,#0062ff 211.8deg,#0064ff 212.3deg,#0065ff 212.9deg,#0067ff 213.5deg,#0069ff 214.0deg,#006bff 214.6deg,#006cff 215.2deg,#006eff 215.9deg,#0070ff 216.5deg,#0072ff 217.1deg,#0074ff 217.8deg,#0076ff 218.5deg,#0078ff 219.2deg,#007aff 219.9deg,#007cff 220.6deg,#007eff 221.3deg,#0080ff 222.1deg,#0083ff 222.9deg,#0085ff 223.6deg,#0087ff 224.4deg,#008aff 225.3deg,#008cff 226.1deg,#008eff 227.0deg,#0091ff 227.8deg,#0094ff 228.7deg,#0096ff 229.6deg,#0099ff 230.5deg,#009cff 231.5deg,#009eff 232.4deg,#00a1ff 233.4deg,#00a4ff 234.4deg,#00a7ff 235.4deg,#00aaff 236.5deg,#00adff 237.5deg,#00b1ff 238.6deg,#00b4ff 239.7deg,#00b7ff 240.7deg,#00bbff 241.9deg,#00beff 243.0deg,#00c2ff 244.1deg,#00c6ff 245.3deg,#00caff 246.5deg,#00ceff 247.6deg,#00d2ff 248.8deg,#00d6ff 250.0deg,#00daff 251.2deg,#00dfff 252.5deg,#00e3ff 253.7deg,#00e8ff 254.9deg,#00edff 256.2deg,#00f2ff 257.4deg,#00f7ff 258.7deg,#00fcff 259.9deg,#00fffc 261.2deg,#00fff7 262.4deg,#00fff2 263.7deg,#00ffec 264.9deg,#00ffe7 266.1deg,#00ffe2 267.4deg,#00ffdd 268.6deg,#00ffd8 269.8deg,#00ffd3 271.1deg,#00ffce 272.3deg,#00ffc9 273.5deg,#00ffc4 274.6deg,#00ffbf 275.8deg,#00ffbb 277.0deg,#00ffb6 278.1deg,#00ffb1 279.3deg,#00ffad 280.4deg,#00ffa8 281.5deg,#00ffa4 282.6deg,#00ff9f 283.6deg,#00ff9b 284.7deg,#00ff96 285.7deg,#00ff92 286.7deg,#00ff8e 287.7deg,#00ff8a 288.7deg,#00ff85 289.7deg,#00ff81 290.7deg,#00ff7d 291.6deg,#00ff79 292.5deg,#00ff75 293.4deg,#00ff71 294.3deg,#00ff6d 295.1deg,#00ff69 296.0deg,#00ff65 296.8deg,#00ff61 297.6deg,#00ff5e 298.4deg,#00ff5a 299.2deg,#00ff56 300.0deg,#00ff52 300.7deg,#00ff4f 301.4deg,#00ff4b 302.1deg,#00ff48 302.8deg,#00ff44 303.5deg,#00ff40 304.2deg,#00ff3d 304.8deg,#00ff39 305.5deg,#00ff36 306.1deg,#00ff33 306.7deg,#00ff2f 307.3deg,#00ff2c 307.9deg,#00ff29 308.5deg,#00ff25 309.0deg,#00ff22 309.6deg,#00ff1f 310.1deg,#00ff1c 310.7deg,#00ff18 311.2deg,#00ff15 311.7deg,#00ff0f 312.6deg,#00ff09 313.6deg,#00ff03 314.5deg,#03ff00 315.4deg,#0aff00 316.4deg,#0eff00 316.9deg,#11ff00 317.5deg,#14ff00 318.0deg,#18ff00 318.6deg,#1bff00 319.1deg,#1fff00 319.7deg,#23ff00 320.3deg,#26ff00 320.9deg,#2aff00 321.5deg,#2eff00 322.1deg,#31ff00 322.8deg,#35ff00 323.4deg,#39ff00 324.1deg,#3dff00 324.8deg,#41ff00 325.5deg,#45ff00 326.2deg,#48ff00 326.9deg,#4cff00 327.6deg,#50ff00 328.4deg,#54ff00 329.2deg,#59ff00 329.9deg,#5dff00 330.7deg,#61ff00 331.6deg,#65ff00 332.4deg,#69ff00 333.2deg,#6eff00 334.1deg,#72ff00 335.0deg,#76ff00 335.9deg,#7bff00 336.8deg,#7fff00 337.7deg,#84ff00 338.7deg,#88ff00 339.6deg,#8dff00 340.6deg,#91ff00 341.6deg,#96ff00 342.6deg,#9bff00 343.6deg,#9fff00 344.6deg,#a4ff00 345.7deg,#a9ff00 346.8deg,#aeff00 347.8deg,#b3ff00 348.9deg,#b8ff00 350.0deg,#bdff00 351.1deg,#c2ff00 352.3deg,#c7ff00 353.4deg,#ccff00 354.6deg,#d2ff00 355.7deg,#d7ff00 356.9deg,#dcff00 358.0deg,#e2ff00 359.2deg,#e7ff00 360deg);clip-path:polygon(449.4px 60.0px,124.6px 29.5px,174.9px 340.5px)"></div></foreignObject>
<path d="M1152.9 162.5L1405.1 120.6L1384.8 118.7Z" fill="url(#o1)" shape-rendering="crispEdges"/>
<path d="M1152.9 162.5L1384.8 118.7L1364.5 116.8Z" fill="url(#o2)" shape-rendering="crispEdges"/>
<path d="M1152.9 162.5L1364.5 116.8L1344.2 114.8Z" fill="url(#o3)" shape-rendering="crispEdges"/>
<path d="M1152.9 162.5L1344.2 114.8L1323.9 112.9Z" fill="url(#o4)" shape-rendering="crispEdges"/>
<path d="M1152.9 162.5L1323.9 112.9L1303.6 111.0Z" fill="url(#o5)" shape-rendering="crispEdges"/>
<path d="M1152.9 162.5L1303.6 111.0L1283.3 109.1Z" fill="url(#o6)" shape-rendering="crispEdges"/>
<path d="M1152.9 162.5L1283.3 109.1L1263.0 107.2Z" fill="url(#o7)" shape-rendering="crispEdges"/>
<path d="M1152.9 162.5L1263.0 107.2L1242.7 105.3Z" fill="url(#o8)" shape-rendering="crispEdges"/>
<path d="M1152.9 162.5L1242.7 105.3L1222.4 103.4Z" fill="url(#o9)" shape-rendering="crispEdges"/>
<path d="M1152.9 162.5L1222.4 103.4L1202.1 101.5Z" fill="url(#o10)" shape-rendering="crispEdges"/>
<path d="M1152.9 162.5L1202.1 101.5L1181.8 99.6Z" fill="url(#o11)" shape-rendering="crispEdges"/>
<path d="M1152.9 162.5L1181.8 99.6L1161.5 97.7Z" fill="url(#o12)" shape-rendering="crispEdges"/>
<path d="M1152.9 162.5L1161.5 97.7L1141.2 95.8Z" fill="url(#o13)" shape-rendering="crispEdges"/>
<path d="M1152.9 162.5L1141.2 95.8L1120.9 93.9Z" fill="url(#o14)" shape-rendering="crispEdges"/>
<path d="M1152.9 162.5L1120.9 93.9L1100.6 92.0Z" fill="url(#o15)" shape-rendering="crispEdges"/>
<path d="M1152.9 162.5L1100.6 92.0L1080.3 90.1Z" fill="url(#o16)" shape-rendering="crispEdges"/>
<path d="M1152.9 162.5L1080.3 90.1L1083.5 109.5Z" fill="url(#o17)" shape-rendering="crispEdges"/>
<path d="M1152.9 162.5L1083.5 109.5L1086.6 129.0Z" fill="url(#o18)" shape-rendering="crispEdges"/>
<path d="M1152.9 162.5L1086.6 129.0L1089.8 148.4Z" fill="url(#o19)" shape-rendering="crispEdges"/>
<path d="M1152.9 162.5L1089.8 148.4L1092.9 167.9Z" fill="url(#o20)" shape-rendering="crispEdges"/>
<path d="M1152.9 162.5L1092.9 167.9L1096.0 187.3Z" fill="url(#o21)" shape-rendering="crispEdges"/>
<path d="M1152.9 162.5L1096.0 187.3L1099.2 206.7Z" fill="url(#o22)" shape-rendering="crispEdges"/>
<path d="M1152.9 162.5L1099.2 206.7L1102.3 226.2Z" fill="url(#o23)" shape-rendering="crispEdges"/>
<path d="M1152.9 162.5L1102.3 226.2L1105.5 245.6Z" fill="url(#o24)" shape-rendering="crispEdges"/>
<path d="M1152.9 162.5L1105.5 245.6L1108.6 265.1Z" fill="url(#o25)" shape-rendering="crispEdges"/>
<path d="M1152.9 162.5L1108.6 265.1L1111.8 284.5Z" fill="url(#o26)" shape-rendering="crispEdges"/>
<path d="M1152.9 162.5L1111.8 284.5L1114.9 303.9Z" fill="url(#o27)" shape-rendering="crispEdges"/>
<path d="M1152.9 162.5L1114.9 303.9L1118.0 323.4Z" fill="url(#o28)" shape-rendering="crispEdges"/>
<path d="M1152.9 162.5L1118.0 323.4L1121.2 342.8Z" fill="url(#o29)" shape-rendering="crispEdges"/>
<path d="M1152.9 162.5L1121.2 342.8L1124.3 362.2Z" fill="url(#o30)" shape-rendering="crispEdges"/>
<path d="M1152.9 162.5L1124.3 362.2L1127.5 381.7Z" fill="url(#o31)" shape-rendering="crispEdges"/>
<path d="M1152.9 162.5L1127.5 381.7L1130.6 401.1Z" fill="url(#o32)" shape-rendering="crispEdges"/>
<path d="M1152.9 162.5L1130.6 401.1L1147.8 383.6Z" fill="url(#o33)" shape-rendering="crispEdges"/>
<path d="M1152.9 162.5L1147.8 383.6L1164.9 366.1Z" fill="url(#o34)" shape-rendering="crispEdges"/>
<path d="M1152.9 162.5L1164.9 366.1L1182.1 348.5Z" fill="url(#o35)" shape-rendering="crispEdges"/>
<path d="M1152.9 162.5L1182.1 348.5L1199.2 331.0Z" fill="url(#o36)" shape-rendering="crispEdges"/>
<path d="M1152.9 162.5L1199.2 331.0L1216.4 313.4Z" fill="url(#o37)" shape-rendering="crispEdges"/>
<path d="M1152.9 162.5L1216.4 313.4L1233.5 295.9Z" fill="url(#o38)" shape-rendering="crispEdges"/>
<path d="M1152.9 162.5L1233.5 295.9L1250.7 278.4Z" fill="url(#o39)" shape-rendering="crispEdges"/>
<path d="M1152.9 162.5L1250.7 278.4L1267.8 260.8Z" fill="url(#o40)" shape-rendering="crispEdges"/>
<path d="M1152.9 162.5L1267.8 260.8L1285.0 243.3Z" fill="url(#o41)" shape-rendering="crispEdges"/>
<path d="M1152.9 162.5L1285.0 243.3L1302.1 225.8Z" fill="url(#o42)" shape-rendering="crispEdges"/>
<path d="M1152.9 162.5L1302.1 225.8L1319.3 208.2Z" fill="url(#o43)" shape-rendering="crispEdges"/>
<path d="M1152.9 162.5L1319.3 208.2L1336.4 190.7Z" fill="url(#o44)" shape-rendering="crispEdges"/>
<path d="M1152.9 162.5L1336.4 190.7L1353.6 173.2Z" fill="url(#o45)" shape-rendering="crispEdges"/>
<path d="M1152.9 162.5L1353.6 173.2L1370.7 155.6Z" fill="url(#o46)" shape-rendering="crispEdges"/>
<path d="M1152.9 162.5L1370.7 155.6L1387.9 138.1Z" fill="url(#o47)" shape-rendering="crispEdges"/>
<path d="M1152.9 162.5L1387.9 138.1L1405.1 120.6Z" fill="url(#o48)" shape-rendering="crispEdges"/>
</g>
<rect x="955.7" y="60.6" width="599.9" height="461.9" fill="none" stroke="#b4b4b4" stroke-width="1.15"/>
<line x1="950.3" y1="522.5" x2="955.7" y2="522.5" stroke="#b8b8b8" stroke-width="1.2"/>
<text x="948.9" y="527.5" font-size="12.8" fill="#dcdcdc" text-anchor="end" font-weight="normal" textLength="7.6" lengthAdjust="spacingAndGlyphs" >0</text>
<line x1="950.3" y1="484.1" x2="955.7" y2="484.1" stroke="#b8b8b8" stroke-width="1.2"/>
<text x="948.9" y="489.1" font-size="12.8" fill="#dcdcdc" text-anchor="end" font-weight="normal" textLength="26.7" lengthAdjust="spacingAndGlyphs" >0,05</text>
<line x1="950.3" y1="445.6" x2="955.7" y2="445.6" stroke="#b8b8b8" stroke-width="1.2"/>
<text x="948.9" y="450.6" font-size="12.8" fill="#dcdcdc" text-anchor="end" font-weight="normal" textLength="19.0" lengthAdjust="spacingAndGlyphs" >0,1</text>
<line x1="950.3" y1="407.2" x2="955.7" y2="407.2" stroke="#b8b8b8" stroke-width="1.2"/>
<text x="948.9" y="412.2" font-size="12.8" fill="#dcdcdc" text-anchor="end" font-weight="normal" textLength="26.7" lengthAdjust="spacingAndGlyphs" >0,15</text>
<line x1="950.3" y1="368.8" x2="955.7" y2="368.8" stroke="#b8b8b8" stroke-width="1.2"/>
<text x="948.9" y="373.8" font-size="12.8" fill="#dcdcdc" text-anchor="end" font-weight="normal" textLength="19.0" lengthAdjust="spacingAndGlyphs" >0,2</text>
<line x1="950.3" y1="330.3" x2="955.7" y2="330.3" stroke="#b8b8b8" stroke-width="1.2"/>
<text x="948.9" y="335.3" font-size="12.8" fill="#dcdcdc" text-anchor="end" font-weight="normal" textLength="26.7" lengthAdjust="spacingAndGlyphs" >0,25</text>
<line x1="950.3" y1="291.9" x2="955.7" y2="291.9" stroke="#b8b8b8" stroke-width="1.2"/>
<text x="948.9" y="296.9" font-size="12.8" fill="#dcdcdc" text-anchor="end" font-weight="normal" textLength="19.0" lengthAdjust="spacingAndGlyphs" >0,3</text>
<line x1="950.3" y1="253.5" x2="955.7" y2="253.5" stroke="#b8b8b8" stroke-width="1.2"/>
<text x="948.9" y="258.5" font-size="12.8" fill="#dcdcdc" text-anchor="end" font-weight="normal" textLength="26.7" lengthAdjust="spacingAndGlyphs" >0,35</text>
<line x1="950.3" y1="215.0" x2="955.7" y2="215.0" stroke="#b8b8b8" stroke-width="1.2"/>
<text x="948.9" y="220.0" font-size="12.8" fill="#dcdcdc" text-anchor="end" font-weight="normal" textLength="19.0" lengthAdjust="spacingAndGlyphs" >0,4</text>
<line x1="950.3" y1="176.6" x2="955.7" y2="176.6" stroke="#b8b8b8" stroke-width="1.2"/>
<text x="948.9" y="181.6" font-size="12.8" fill="#dcdcdc" text-anchor="end" font-weight="normal" textLength="26.7" lengthAdjust="spacingAndGlyphs" >0,45</text>
<line x1="950.3" y1="138.1" x2="955.7" y2="138.1" stroke="#b8b8b8" stroke-width="1.2"/>
<text x="948.9" y="143.1" font-size="12.8" fill="#dcdcdc" text-anchor="end" font-weight="normal" textLength="19.0" lengthAdjust="spacingAndGlyphs" >0,5</text>
<line x1="950.3" y1="99.7" x2="955.7" y2="99.7" stroke="#b8b8b8" stroke-width="1.2"/>
<text x="948.9" y="104.7" font-size="12.8" fill="#dcdcdc" text-anchor="end" font-weight="normal" textLength="26.7" lengthAdjust="spacingAndGlyphs" >0,55</text>
<line x1="955.7" y1="522.5" x2="955.7" y2="527.7" stroke="#b8b8b8" stroke-width="1.2"/>
<text x="955.7" y="543.0" font-size="12.8" fill="#dcdcdc" text-anchor="middle" font-weight="normal" textLength="7.6" lengthAdjust="spacingAndGlyphs" >0</text>
<line x1="1005.6" y1="522.5" x2="1005.6" y2="527.7" stroke="#b8b8b8" stroke-width="1.2"/>
<text x="1005.6" y="543.0" font-size="12.8" fill="#dcdcdc" text-anchor="middle" font-weight="normal" textLength="26.7" lengthAdjust="spacingAndGlyphs" >0,05</text>
<line x1="1055.4" y1="522.5" x2="1055.4" y2="527.7" stroke="#b8b8b8" stroke-width="1.2"/>
<text x="1055.4" y="543.0" font-size="12.8" fill="#dcdcdc" text-anchor="middle" font-weight="normal" textLength="19.0" lengthAdjust="spacingAndGlyphs" >0,1</text>
<line x1="1105.2" y1="522.5" x2="1105.2" y2="527.7" stroke="#b8b8b8" stroke-width="1.2"/>
<text x="1105.2" y="543.0" font-size="12.8" fill="#dcdcdc" text-anchor="middle" font-weight="normal" textLength="26.7" lengthAdjust="spacingAndGlyphs" >0,15</text>
<line x1="1155.1" y1="522.5" x2="1155.1" y2="527.7" stroke="#b8b8b8" stroke-width="1.2"/>
<text x="1155.1" y="543.0" font-size="12.8" fill="#dcdcdc" text-anchor="middle" font-weight="normal" textLength="19.0" lengthAdjust="spacingAndGlyphs" >0,2</text>
<line x1="1205.0" y1="522.5" x2="1205.0" y2="527.7" stroke="#b8b8b8" stroke-width="1.2"/>
<text x="1205.0" y="543.0" font-size="12.8" fill="#dcdcdc" text-anchor="middle" font-weight="normal" textLength="26.7" lengthAdjust="spacingAndGlyphs" >0,25</text>
<line x1="1254.8" y1="522.5" x2="1254.8" y2="527.7" stroke="#b8b8b8" stroke-width="1.2"/>
<text x="1254.8" y="543.0" font-size="12.8" fill="#dcdcdc" text-anchor="middle" font-weight="normal" textLength="19.0" lengthAdjust="spacingAndGlyphs" >0,3</text>
<line x1="1304.7" y1="522.5" x2="1304.7" y2="527.7" stroke="#b8b8b8" stroke-width="1.2"/>
<text x="1304.7" y="543.0" font-size="12.8" fill="#dcdcdc" text-anchor="middle" font-weight="normal" textLength="26.7" lengthAdjust="spacingAndGlyphs" >0,35</text>
<line x1="1354.5" y1="522.5" x2="1354.5" y2="527.7" stroke="#b8b8b8" stroke-width="1.2"/>
<text x="1354.5" y="543.0" font-size="12.8" fill="#dcdcdc" text-anchor="middle" font-weight="normal" textLength="19.0" lengthAdjust="spacingAndGlyphs" >0,4</text>
<line x1="1404.4" y1="522.5" x2="1404.4" y2="527.7" stroke="#b8b8b8" stroke-width="1.2"/>
<text x="1404.4" y="543.0" font-size="12.8" fill="#dcdcdc" text-anchor="middle" font-weight="normal" textLength="26.7" lengthAdjust="spacingAndGlyphs" >0,45</text>
<line x1="1454.2" y1="522.5" x2="1454.2" y2="527.7" stroke="#b8b8b8" stroke-width="1.2"/>
<text x="1454.2" y="543.0" font-size="12.8" fill="#dcdcdc" text-anchor="middle" font-weight="normal" textLength="19.0" lengthAdjust="spacingAndGlyphs" >0,5</text>
<line x1="1504.1" y1="522.5" x2="1504.1" y2="527.7" stroke="#b8b8b8" stroke-width="1.2"/>
<text x="1504.1" y="543.0" font-size="12.8" fill="#dcdcdc" text-anchor="middle" font-weight="normal" textLength="26.7" lengthAdjust="spacingAndGlyphs" >0,55</text>
<rect x="1191.9" y="148.0" width="12.2" height="12.2" fill="none" stroke="#ffffff" stroke-width="1.6"/>
<rect x="1241.8" y="138.9" width="12.2" height="12.2" fill="none" stroke="#ffffff" stroke-width="1.6"/>
<rect x="1287.9" y="131.9" width="12.2" height="12.2" fill="none" stroke="#ffffff" stroke-width="1.6"/>
<rect x="1338.8" y="122.8" width="12.2" height="12.2" fill="none" stroke="#ffffff" stroke-width="1.6"/>
<rect x="1399.0" y="112.8" width="12.2" height="12.2" fill="none" stroke="#ffffff" stroke-width="1.6"/>
<rect x="1073.4" y="82.9" width="12.2" height="12.2" fill="none" stroke="#ffffff" stroke-width="1.6"/>
<rect x="1084.7" y="93.8" width="12.2" height="12.2" fill="none" stroke="#ffffff" stroke-width="1.6"/>
<rect x="1096.5" y="105.7" width="12.2" height="12.2" fill="none" stroke="#ffffff" stroke-width="1.6"/>
<rect x="1110.9" y="119.8" width="12.2" height="12.2" fill="none" stroke="#ffffff" stroke-width="1.6"/>
<rect x="1126.9" y="134.7" width="12.2" height="12.2" fill="none" stroke="#ffffff" stroke-width="1.6"/>
<rect x="1143.5" y="183.2" width="12.2" height="12.2" fill="none" stroke="#ffffff" stroke-width="1.6"/>
<rect x="1140.5" y="217.7" width="12.2" height="12.2" fill="none" stroke="#ffffff" stroke-width="1.6"/>
<rect x="1136.9" y="259.9" width="12.2" height="12.2" fill="none" stroke="#ffffff" stroke-width="1.6"/>
<rect x="1131.6" y="313.4" width="12.2" height="12.2" fill="none" stroke="#ffffff" stroke-width="1.6"/>
<rect x="1124.7" y="393.6" width="12.2" height="12.2" fill="none" stroke="#ffffff" stroke-width="1.6"/>
<rect x="1087.9" y="165.7" width="12.2" height="12.2" fill="none" stroke="#ffffff" stroke-width="1.6"/>
<rect x="1097.9" y="162.5" width="12.2" height="12.2" fill="none" stroke="#ffffff" stroke-width="1.6"/>
<rect x="1110.5" y="161.4" width="12.2" height="12.2" fill="none" stroke="#ffffff" stroke-width="1.6"/>
<rect x="1122.5" y="158.5" width="12.2" height="12.2" fill="none" stroke="#ffffff" stroke-width="1.6"/>
<rect x="1134.1" y="157.1" width="12.2" height="12.2" fill="none" stroke="#ffffff" stroke-width="1.6"/>
<rect x="1162.5" y="170.9" width="12.2" height="12.2" fill="none" stroke="#ffffff" stroke-width="1.6"/>
<rect x="1180.9" y="188.1" width="12.2" height="12.2" fill="none" stroke="#ffffff" stroke-width="1.6"/>
<rect x="1198.6" y="207.7" width="12.2" height="12.2" fill="none" stroke="#ffffff" stroke-width="1.6"/>
<rect x="1221.9" y="232.2" width="12.2" height="12.2" fill="none" stroke="#ffffff" stroke-width="1.6"/>
<rect x="1253.2" y="261.0" width="12.2" height="12.2" fill="none" stroke="#ffffff" stroke-width="1.6"/>
<rect x="1147.7" y="138.7" width="12.2" height="12.2" fill="none" stroke="#ffffff" stroke-width="1.6"/>
<rect x="1149.0" y="124.0" width="12.2" height="12.2" fill="none" stroke="#ffffff" stroke-width="1.6"/>
<rect x="1150.2" y="111.5" width="12.2" height="12.2" fill="none" stroke="#ffffff" stroke-width="1.6"/>
<rect x="1151.2" y="100.9" width="12.2" height="12.2" fill="none" stroke="#ffffff" stroke-width="1.6"/>
<rect x="1152.2" y="89.9" width="12.2" height="12.2" fill="none" stroke="#ffffff" stroke-width="1.6"/>

<rect x="1146.0" y="154.8" width="12.2" height="12.2" fill="none" stroke="#000" stroke-width="1.9"/>
<circle cx="1107.4" cy="89.5" r="4.3" fill="rgb(30,160,50)" stroke="#111" stroke-width="1.1"/>
<circle cx="1115.3" cy="102.5" r="4.3" fill="rgb(80,160,95)" stroke="#111" stroke-width="1.1"/>
<circle cx="1122.4" cy="115.5" r="4.3" fill="rgb(110,168,120)" stroke="#111" stroke-width="1.1"/>
<circle cx="1130.5" cy="129.5" r="4.3" fill="rgb(135,178,140)" stroke="#111" stroke-width="1.1"/>
<circle cx="1140.5" cy="146.2" r="4.3" fill="rgb(160,185,160)" stroke="#111" stroke-width="1.1"/>
<circle cx="1167.4" cy="98.4" r="4.3" fill="rgb(176,176,50)" stroke="#111" stroke-width="1.1"/>
<circle cx="1163.3" cy="111.4" r="4.3" fill="rgb(180,180,90)" stroke="#111" stroke-width="1.1"/>
<circle cx="1161.4" cy="123.4" r="4.3" fill="rgb(185,185,115)" stroke="#111" stroke-width="1.1"/>
<circle cx="1157.5" cy="135.4" r="4.3" fill="rgb(185,185,135)" stroke="#111" stroke-width="1.1"/>
<circle cx="1154.7" cy="149.4" r="4.3" fill="rgb(190,190,160)" stroke="#111" stroke-width="1.1"/>
<circle cx="1108.4" cy="172.5" r="4.3" fill="rgb(30,172,172)" stroke="#111" stroke-width="1.1"/>
<circle cx="1116.4" cy="170.4" r="4.3" fill="rgb(80,178,178)" stroke="#111" stroke-width="1.1"/>
<circle cx="1125.5" cy="169.4" r="4.3" fill="rgb(110,184,184)" stroke="#111" stroke-width="1.1"/>
<circle cx="1134.4" cy="167.5" r="4.3" fill="rgb(140,190,190)" stroke="#111" stroke-width="1.1"/>
<circle cx="1142.4" cy="166.3" r="4.3" fill="rgb(165,194,194)" stroke="#111" stroke-width="1.1"/>
<circle cx="1182.5" cy="158.4" r="4.3" fill="rgb(180,140,140)" stroke="#111" stroke-width="1.1"/>
<circle cx="1219.4" cy="151.3" r="4.3" fill="rgb(176,112,112)" stroke="#111" stroke-width="1.1"/>
<circle cx="1256.8" cy="144.6" r="4.3" fill="rgb(176,85,85)" stroke="#111" stroke-width="1.1"/>
<circle cx="1300.3" cy="135.4" r="4.3" fill="rgb(180,70,70)" stroke="#111" stroke-width="1.1"/>
<circle cx="1342.6" cy="126.4" r="4.3" fill="rgb(190,20,20)" stroke="#111" stroke-width="1.1"/>
<circle cx="1158.2" cy="177.7" r="4.3" fill="rgb(185,160,185)" stroke="#111" stroke-width="1.1"/>
<circle cx="1167.4" cy="193.6" r="4.3" fill="rgb(185,135,185)" stroke="#111" stroke-width="1.1"/>
<circle cx="1176.5" cy="208.3" r="4.3" fill="rgb(190,110,190)" stroke="#111" stroke-width="1.1"/>
<circle cx="1188.2" cy="227.3" r="4.3" fill="rgb(190,80,190)" stroke="#111" stroke-width="1.1"/>
<circle cx="1199.2" cy="249.4" r="4.3" fill="rgb(190,30,170)" stroke="#111" stroke-width="1.1"/>
<circle cx="1143.5" cy="188.1" r="4.3" fill="rgb(165,165,185)" stroke="#111" stroke-width="1.1"/>
<circle cx="1138.0" cy="217.5" r="4.3" fill="rgb(145,145,185)" stroke="#111" stroke-width="1.1"/>
<circle cx="1130.0" cy="246.3" r="4.3" fill="rgb(120,120,185)" stroke="#111" stroke-width="1.1"/>
<circle cx="1120.2" cy="283.1" r="4.3" fill="rgb(95,95,180)" stroke="#111" stroke-width="1.1"/>
<circle cx="1109.8" cy="326.0" r="4.3" fill="rgb(60,60,170)" stroke="#111" stroke-width="1.1"/>
<circle cx="1151" cy="162.2" r="3.7" fill="#fff" stroke="#111" stroke-width="1"/>
<defs><clipPath id="insc"><rect x="1351" y="380" width="199" height="134"/></clipPath><linearGradient id="insA" x1="0" y1="0" x2="1" y2="1"><stop offset="0" stop-color="#6a9400"/><stop offset="0.5" stop-color="#8e9000"/><stop offset="1" stop-color="#8a6a00"/></linearGradient><linearGradient id="insB" x1="0" y1="0" x2="1" y2="1"><stop offset="0" stop-color="#b0ff00"/><stop offset="0.45" stop-color="#ffff10"/><stop offset="1" stop-color="#ffa800"/></linearGradient></defs>
<g clip-path="url(#insc)"><rect x="1351" y="380" width="199" height="134" fill="url(#insA)"/><path d="M1351 394 L1550 501 L1550 514 L1351 514 Z" fill="url(#insB)"/></g>
<rect x="1351" y="380" width="199" height="134" fill="none" stroke="#8a8a8a" stroke-width="2"/>
<rect x="1442.8" y="440.2" width="12.5" height="12.5" fill="none" stroke="#fff" stroke-width="1.6"/>
<circle cx="1473.5" cy="491.2" r="4.3" fill="rgb(180,180,50)" stroke="#111" stroke-width="1.1"/>
<text x="48.0" y="585.9" font-size="27.0" fill="#f0f0f0" text-anchor="start" font-weight="normal" textLength="218.3" lengthAdjust="spacingAndGlyphs" >Avg dE2000: 5,57</text>
<text x="35.9" y="623.7" font-size="27.0" fill="#f0f0f0" text-anchor="start" font-weight="normal" textLength="242.9" lengthAdjust="spacingAndGlyphs" >Max dE2000: 15,66</text>
<text x="14.4" y="669.0" font-size="27.0" fill="#f0f0f0" text-anchor="start" font-weight="normal" textLength="204.6" lengthAdjust="spacingAndGlyphs" >Current Reading</text>
<text x="14.4" y="701.1" font-size="22.0" fill="#f0f0f0" text-anchor="start" font-weight="normal" textLength="95.2" lengthAdjust="spacingAndGlyphs" >x: 0,4253</text>
<text x="160.6" y="701.1" font-size="22.0" fill="#f0f0f0" text-anchor="start" font-weight="normal" textLength="97.4" lengthAdjust="spacingAndGlyphs" >y: 0,4884</text>
<text x="14.4" y="738.9" font-size="22.0" fill="#f0f0f0" text-anchor="start" font-weight="normal" textLength="90.2" lengthAdjust="spacingAndGlyphs" >fL: 50,36</text>
<text x="14.4" y="770.2" font-size="22.0" fill="#f0f0f0" text-anchor="start" font-weight="normal" textLength="148.0" lengthAdjust="spacingAndGlyphs" >cd/m²: 172,55</text>
<text x="438.1" y="587.3" font-size="12.8" fill="#dcdcdc" text-anchor="middle" font-weight="normal" textLength="77.0" lengthAdjust="spacingAndGlyphs" >RGB Balance</text>
<rect x="335.5" y="591.5" width="233.7" height="169.3" fill="#262626"/>
<line x1="329.5" y1="593.0" x2="569.2" y2="593.0" stroke="#b4b4b4" stroke-width="1.15"/>
<text x="328.9" y="597.8" font-size="13.2" fill="#dcdcdc" text-anchor="end" font-weight="normal" textLength="22.0" lengthAdjust="spacingAndGlyphs" >120</text>
<line x1="329.5" y1="635.4" x2="569.2" y2="635.4" stroke="#b4b4b4" stroke-width="1.15"/>
<text x="328.9" y="640.2" font-size="13.2" fill="#dcdcdc" text-anchor="end" font-weight="normal" textLength="22.0" lengthAdjust="spacingAndGlyphs" >110</text>
<line x1="329.5" y1="677.4" x2="569.2" y2="677.4" stroke="#b4b4b4" stroke-width="1.15"/>
<text x="328.9" y="682.2" font-size="13.2" fill="#dcdcdc" text-anchor="end" font-weight="normal" textLength="22.0" lengthAdjust="spacingAndGlyphs" >100</text>
<line x1="329.5" y1="719.3" x2="569.2" y2="719.3" stroke="#b4b4b4" stroke-width="1.15"/>
<text x="328.9" y="725.6" font-size="13.2" fill="#dcdcdc" text-anchor="end" font-weight="normal" textLength="14.8" lengthAdjust="spacingAndGlyphs" >90</text>
<line x1="329.5" y1="760.8" x2="569.2" y2="760.8" stroke="#b4b4b4" stroke-width="1.15"/>
<text x="328.9" y="767.1" font-size="13.2" fill="#dcdcdc" text-anchor="end" font-weight="normal" textLength="14.8" lengthAdjust="spacingAndGlyphs" >80</text>
<polyline points="335.5,766.8 335.5,591.5 569.2,591.5 569.2,766.8" fill="none" stroke="#b4b4b4" stroke-width="1.15"/>
<defs><linearGradient id="rbR" x1="0" y1="0" x2="0" y2="1"><stop offset="0" stop-color="#ff5c5c"/><stop offset="1" stop-color="#ff0000"/></linearGradient><linearGradient id="rbG" x1="0" y1="0" x2="0" y2="1"><stop offset="0" stop-color="#5cac5c"/><stop offset="1" stop-color="#0a800a"/></linearGradient><linearGradient id="rbB" x1="0" y1="0" x2="0" y2="1"><stop offset="0" stop-color="#5c5cff"/><stop offset="0.6" stop-color="#1010ff"/><stop offset="1" stop-color="#0000ff"/></linearGradient></defs>
<rect x="358.6" y="673.5" width="61.0" height="87.3" fill="url(#rbR)" stroke="#000" stroke-width="1.5"/>
<rect x="420.4" y="691.6" width="61.1" height="69.2" fill="url(#rbG)" stroke="#000" stroke-width="1.5"/>
<rect x="483.2" y="625.5" width="61.6" height="135.3" fill="url(#rbB)" stroke="#000" stroke-width="1.5"/>
<text x="452.2" y="776.0" font-size="13.2" fill="#dcdcdc" text-anchor="middle" font-weight="normal" textLength="33.5" lengthAdjust="spacingAndGlyphs" >100%</text>
<defs><linearGradient id="thd" x1="0" y1="0" x2="0" y2="1"><stop offset="0" stop-color="#363636"/><stop offset="0.5" stop-color="#333333"/><stop offset="0.52" stop-color="#181818"/><stop offset="1" stop-color="#101010"/></linearGradient><linearGradient id="tlr" x1="0" y1="0" x2="1" y2="0"><stop offset="0" stop-color="#858585"/><stop offset="0.5" stop-color="#8c8c8c"/><stop offset="1" stop-color="#858585"/></linearGradient></defs>
<rect x="589.5" y="562.0" width="682.0" height="27.7" fill="url(#thd)"/>
<rect x="589.5" y="589.7" width="682.0" height="24.14" fill="#454545"/>
<rect x="589.5" y="613.7" width="682.0" height="24.14" fill="url(#tlr)"/>
<rect x="589.5" y="637.8" width="682.0" height="24.14" fill="#454545"/>
<rect x="589.5" y="661.8" width="682.0" height="24.14" fill="url(#tlr)"/>
<rect x="589.5" y="685.9" width="682.0" height="24.14" fill="#454545"/>
<rect x="589.5" y="709.9" width="682.0" height="24.14" fill="url(#tlr)"/>
<rect x="589.5" y="733.9" width="682.0" height="24.14" fill="#454545"/>
<rect x="589.5" y="758.0" width="682.0" height="24.14" fill="url(#tlr)"/>
<rect x="589.0" y="561.5" width="683.0" height="221.0" fill="none" stroke="#141414" stroke-width="1.5"/>
<text x="606.8" y="607.8" font-size="15.5" fill="#f4f4f4" text-anchor="start" font-weight="bold" textLength="80.1" lengthAdjust="spacingAndGlyphs" >x: CIE31</text>
<text x="778.0" y="607.8" font-size="15.5" fill="#f4f4f4" text-anchor="start" font-weight="normal" textLength="64.9" lengthAdjust="spacingAndGlyphs" >0,3281</text>
<text x="878.0" y="607.8" font-size="15.5" fill="#f4f4f4" text-anchor="start" font-weight="normal" textLength="64.9" lengthAdjust="spacingAndGlyphs" >0,3513</text>
<text x="978.0" y="607.8" font-size="15.5" fill="#f4f4f4" text-anchor="start" font-weight="normal" textLength="64.9" lengthAdjust="spacingAndGlyphs" >0,3750</text>
<text x="1078.0" y="607.8" font-size="15.5" fill="#f4f4f4" text-anchor="start" font-weight="normal" textLength="64.9" lengthAdjust="spacingAndGlyphs" >0,3989</text>
<text x="1178.0" y="607.8" font-size="15.5" fill="#f4f4f4" text-anchor="start" font-weight="normal" textLength="64.9" lengthAdjust="spacingAndGlyphs" >0,4253</text>
<text x="606.8" y="631.8" font-size="15.5" fill="#f4f4f4" text-anchor="start" font-weight="bold" textLength="80.1" lengthAdjust="spacingAndGlyphs" >y: CIE31</text>
<text x="778.0" y="631.8" font-size="15.5" fill="#f4f4f4" text-anchor="start" font-weight="normal" textLength="64.9" lengthAdjust="spacingAndGlyphs" >0,3530</text>
<text x="878.0" y="631.8" font-size="15.5" fill="#f4f4f4" text-anchor="start" font-weight="normal" textLength="64.9" lengthAdjust="spacingAndGlyphs" >0,3853</text>
<text x="978.0" y="631.8" font-size="15.5" fill="#f4f4f4" text-anchor="start" font-weight="normal" textLength="64.9" lengthAdjust="spacingAndGlyphs" >0,4183</text>
<text x="1078.0" y="631.8" font-size="15.5" fill="#f4f4f4" text-anchor="start" font-weight="normal" textLength="64.9" lengthAdjust="spacingAndGlyphs" >0,4517</text>
<text x="1178.0" y="631.8" font-size="15.5" fill="#f4f4f4" text-anchor="start" font-weight="normal" textLength="64.9" lengthAdjust="spacingAndGlyphs" >0,4884</text>
<text x="606.8" y="655.9" font-size="15.5" fill="#f4f4f4" text-anchor="start" font-weight="bold" textLength="13.5" lengthAdjust="spacingAndGlyphs" >Y</text>
<text x="778.0" y="655.9" font-size="15.5" fill="#f4f4f4" text-anchor="start" font-weight="normal" textLength="88.6" lengthAdjust="spacingAndGlyphs" >195,7297</text>
<text x="878.0" y="655.9" font-size="15.5" fill="#f4f4f4" text-anchor="start" font-weight="normal" textLength="88.6" lengthAdjust="spacingAndGlyphs" >188,1665</text>
<text x="978.0" y="655.9" font-size="15.5" fill="#f4f4f4" text-anchor="start" font-weight="normal" textLength="85.4" lengthAdjust="spacingAndGlyphs" >182,1113</text>
<text x="1078.0" y="655.9" font-size="15.5" fill="#f4f4f4" text-anchor="start" font-weight="normal" textLength="88.6" lengthAdjust="spacingAndGlyphs" >177,1664</text>
<text x="1178.0" y="655.9" font-size="15.5" fill="#f4f4f4" text-anchor="start" font-weight="normal" textLength="88.6" lengthAdjust="spacingAndGlyphs" >172,5549</text>
<text x="606.8" y="679.9" font-size="15.5" fill="#f4f4f4" text-anchor="start" font-weight="bold" textLength="140.7" lengthAdjust="spacingAndGlyphs" >Target x:CIE31</text>
<text x="778.0" y="679.9" font-size="15.5" fill="#f4f4f4" text-anchor="start" font-weight="normal" textLength="64.9" lengthAdjust="spacingAndGlyphs" >0,3344</text>
<text x="878.0" y="679.9" font-size="15.5" fill="#f4f4f4" text-anchor="start" font-weight="normal" textLength="64.9" lengthAdjust="spacingAndGlyphs" >0,3564</text>
<text x="978.0" y="679.9" font-size="15.5" fill="#f4f4f4" text-anchor="start" font-weight="normal" textLength="64.9" lengthAdjust="spacingAndGlyphs" >0,3773</text>
<text x="1078.0" y="679.9" font-size="15.5" fill="#f4f4f4" text-anchor="start" font-weight="normal" textLength="64.9" lengthAdjust="spacingAndGlyphs" >0,3969</text>
<text x="1178.0" y="679.9" font-size="15.5" fill="#f4f4f4" text-anchor="start" font-weight="normal" textLength="64.9" lengthAdjust="spacingAndGlyphs" >0,4193</text>
<text x="606.8" y="704.0" font-size="15.5" fill="#f4f4f4" text-anchor="start" font-weight="bold" textLength="140.7" lengthAdjust="spacingAndGlyphs" >Target y:CIE31</text>
<text x="778.0" y="704.0" font-size="15.5" fill="#f4f4f4" text-anchor="start" font-weight="normal" textLength="64.9" lengthAdjust="spacingAndGlyphs" >0,3648</text>
<text x="878.0" y="704.0" font-size="15.5" fill="#f4f4f4" text-anchor="start" font-weight="normal" textLength="64.9" lengthAdjust="spacingAndGlyphs" >0,4013</text>
<text x="978.0" y="704.0" font-size="15.5" fill="#f4f4f4" text-anchor="start" font-weight="normal" textLength="64.9" lengthAdjust="spacingAndGlyphs" >0,4358</text>
<text x="1078.0" y="704.0" font-size="15.5" fill="#f4f4f4" text-anchor="start" font-weight="normal" textLength="64.9" lengthAdjust="spacingAndGlyphs" >0,4682</text>
<text x="1178.0" y="704.0" font-size="15.5" fill="#f4f4f4" text-anchor="start" font-weight="normal" textLength="64.9" lengthAdjust="spacingAndGlyphs" >0,5053</text>
<text x="606.8" y="728.0" font-size="15.5" fill="#f4f4f4" text-anchor="start" font-weight="bold" textLength="79.4" lengthAdjust="spacingAndGlyphs" >Target Y</text>
<text x="778.0" y="728.0" font-size="15.5" fill="#f4f4f4" text-anchor="start" font-weight="normal" textLength="88.6" lengthAdjust="spacingAndGlyphs" >195,9554</text>
<text x="878.0" y="728.0" font-size="15.5" fill="#f4f4f4" text-anchor="start" font-weight="normal" textLength="88.6" lengthAdjust="spacingAndGlyphs" >192,5158</text>
<text x="978.0" y="728.0" font-size="15.5" fill="#f4f4f4" text-anchor="start" font-weight="normal" textLength="88.6" lengthAdjust="spacingAndGlyphs" >189,8730</text>
<text x="1078.0" y="728.0" font-size="15.5" fill="#f4f4f4" text-anchor="start" font-weight="normal" textLength="88.6" lengthAdjust="spacingAndGlyphs" >187,7989</text>
<text x="1178.0" y="728.0" font-size="15.5" fill="#f4f4f4" text-anchor="start" font-weight="normal" textLength="88.6" lengthAdjust="spacingAndGlyphs" >185,7937</text>
<text x="606.8" y="752.0" font-size="15.5" fill="#f4f4f4" text-anchor="start" font-weight="bold" textLength="78.9" lengthAdjust="spacingAndGlyphs" >ΔE 2000</text>
<text x="778.0" y="752.0" font-size="15.5" fill="#f4f4f4" text-anchor="start" font-weight="normal" textLength="64.9" lengthAdjust="spacingAndGlyphs" >3,3086</text>
<text x="878.0" y="752.0" font-size="15.5" fill="#f4f4f4" text-anchor="start" font-weight="normal" textLength="64.9" lengthAdjust="spacingAndGlyphs" >3,3601</text>
<text x="978.0" y="752.0" font-size="15.5" fill="#f4f4f4" text-anchor="start" font-weight="normal" textLength="64.9" lengthAdjust="spacingAndGlyphs" >3,3452</text>
<text x="1078.0" y="752.0" font-size="15.5" fill="#f4f4f4" text-anchor="start" font-weight="normal" textLength="64.9" lengthAdjust="spacingAndGlyphs" >3,4015</text>
<text x="1178.0" y="752.0" font-size="15.5" fill="#f4f4f4" text-anchor="start" font-weight="normal" textLength="64.9" lengthAdjust="spacingAndGlyphs" >3,6484</text>
<text x="606.8" y="776.1" font-size="15.5" fill="#f4f4f4" text-anchor="start" font-weight="bold" textLength="65.4" lengthAdjust="spacingAndGlyphs" >ΔE ITP</text>
<text x="778.0" y="776.1" font-size="15.5" fill="#f4f4f4" text-anchor="start" font-weight="normal" textLength="64.9" lengthAdjust="spacingAndGlyphs" >5,0965</text>
<text x="878.0" y="776.1" font-size="15.5" fill="#f4f4f4" text-anchor="start" font-weight="normal" textLength="64.9" lengthAdjust="spacingAndGlyphs" >7,0918</text>
<text x="978.0" y="776.1" font-size="15.5" fill="#f4f4f4" text-anchor="start" font-weight="normal" textLength="64.9" lengthAdjust="spacingAndGlyphs" >8,6712</text>
<text x="1078.0" y="776.1" font-size="15.5" fill="#f4f4f4" text-anchor="start" font-weight="normal" textLength="64.9" lengthAdjust="spacingAndGlyphs" >9,4848</text>
<text x="1178.0" y="776.1" font-size="15.5" fill="#f4f4f4" text-anchor="start" font-weight="normal" textLength="72.0" lengthAdjust="spacingAndGlyphs" >11,1114</text>
<text x="822.0" y="581.8" font-size="14.0" fill="#f4f4f4" text-anchor="middle" font-weight="bold" textLength="38.4" lengthAdjust="spacingAndGlyphs" >20%</text>
<text x="922.0" y="581.8" font-size="14.0" fill="#f4f4f4" text-anchor="middle" font-weight="bold" textLength="38.4" lengthAdjust="spacingAndGlyphs" >40%</text>
<text x="1022.0" y="581.8" font-size="14.0" fill="#f4f4f4" text-anchor="middle" font-weight="bold" textLength="38.4" lengthAdjust="spacingAndGlyphs" >60%</text>
<text x="1122.0" y="581.8" font-size="14.0" fill="#f4f4f4" text-anchor="middle" font-weight="bold" textLength="38.4" lengthAdjust="spacingAndGlyphs" >80%</text>
<text x="1222.0" y="581.8" font-size="14.0" fill="#f4f4f4" text-anchor="middle" font-weight="bold" textLength="49.1" lengthAdjust="spacingAndGlyphs" >100%</text>
<defs><linearGradient id="btn" x1="0" y1="0" x2="0" y2="1"><stop offset="0" stop-color="#b4b4b4"/><stop offset="0.45" stop-color="#8e8e8e"/><stop offset="1" stop-color="#5e5e5e"/></linearGradient><linearGradient id="btnsel" x1="0" y1="0" x2="0" y2="1"><stop offset="0" stop-color="#1e1e1e"/><stop offset="0.6" stop-color="#262626"/><stop offset="1" stop-color="#3a3a3a"/></linearGradient><linearGradient id="barbg" x1="0" y1="0" x2="0" y2="1"><stop offset="0" stop-color="#4a4a4a"/><stop offset="1" stop-color="#1e1e1e"/></linearGradient><radialGradient id="circ" cx="0.5" cy="0.3" r="0.6"><stop offset="0" stop-color="#9a9a9a"/><stop offset="1" stop-color="#7a7a7a"/></radialGradient></defs>
<rect x="811" y="805" width="432" height="60" fill="url(#barbg)"/>
<rect x="1243" y="805" width="0" height="60" fill="#2a2a2a"/>
<rect x="1.5" y="805" width="44.5" height="64" rx="4" fill="url(#btn)"/>
<circle cx="23.6" cy="813.5" r="7" fill="#7c7c7c"/>
<path d="M19.6 816.2 L27.6 816.2 L23.6 811 Z" fill="#2e2e2e"/>
<rect x="6" y="830.8" width="35.3" height="30.5" rx="3" fill="#ffff00" stroke="#7a7a00" stroke-width="1"/>
<rect x="52.0" y="805" width="150.0" height="64" rx="4" fill="url(#btn)"/>
<rect x="57.7" y="810.4" width="139.2" height="35.7" rx="3" fill="#bfbfa2" stroke="#7a7a5a" stroke-width="0.7"/>
<text x="128.0" y="860.8" font-size="11.0" fill="#2a2a2a" text-anchor="middle" font-weight="normal" textLength="19.8" lengthAdjust="spacingAndGlyphs" stroke="#2a2a2a" stroke-width="0.25">20%</text>
<rect x="204.0" y="805" width="149.0" height="64" rx="4" fill="url(#btn)"/>
<rect x="209.7" y="810.4" width="138.2" height="35.7" rx="3" fill="#c0bf88" stroke="#7a7a5a" stroke-width="0.7"/>
<text x="279.5" y="860.8" font-size="11.0" fill="#2a2a2a" text-anchor="middle" font-weight="normal" textLength="19.8" lengthAdjust="spacingAndGlyphs" stroke="#2a2a2a" stroke-width="0.25">40%</text>
<rect x="356.0" y="805" width="149.0" height="64" rx="4" fill="url(#btn)"/>
<rect x="361.7" y="810.4" width="138.2" height="35.7" rx="3" fill="#c0be6a" stroke="#7a7a5a" stroke-width="0.7"/>
<text x="431.5" y="860.8" font-size="11.0" fill="#2a2a2a" text-anchor="middle" font-weight="normal" textLength="19.8" lengthAdjust="spacingAndGlyphs" stroke="#2a2a2a" stroke-width="0.25">60%</text>
<rect x="507.6" y="805" width="150.1" height="64" rx="4" fill="url(#btn)"/>
<rect x="513.3" y="810.4" width="139.3" height="35.7" rx="3" fill="#c1bf4e" stroke="#7a7a5a" stroke-width="0.7"/>
<text x="583.7" y="860.8" font-size="11.0" fill="#2a2a2a" text-anchor="middle" font-weight="normal" textLength="19.8" lengthAdjust="spacingAndGlyphs" stroke="#2a2a2a" stroke-width="0.25">80%</text>
<rect x="660.3" y="805" width="149.6" height="64" rx="4" fill="url(#btnsel)"/>
<rect x="664.9" y="810" width="140.1" height="36.2" rx="3" fill="#c4c000"/>
<text x="735.0" y="861.5" font-size="11.0" fill="#ffffff" text-anchor="middle" font-weight="bold" >100%</text>
<defs><linearGradient id="circg" x1="0" y1="0" x2="0" y2="1"><stop offset="0" stop-color="#777777"/><stop offset="1" stop-color="#a8a8a8"/></linearGradient><linearGradient id="btn2" x1="0" y1="0" x2="0" y2="1"><stop offset="0" stop-color="#b2b2b2"/><stop offset="1" stop-color="#6a6a6a"/></linearGradient><linearGradient id="stopsq" x1="0" y1="0" x2="0" y2="1"><stop offset="0" stop-color="#000"/><stop offset="0.55" stop-color="#000"/><stop offset="0.56" stop-color="#1a1a1a"/><stop offset="1" stop-color="#000"/></linearGradient></defs>
<rect x="1243" y="804.7" width="48" height="64" rx="4" fill="url(#btn)"/>
<line x1="1243" y1="823.3" x2="1291" y2="823.3" stroke="#4a4a4a" stroke-width="1.2"/>
<circle cx="1267.7" cy="813" r="7" fill="url(#circg)"/>
<path d="M1263.7 815.7 L1271.7 815.7 L1267.7 810.5 Z" fill="#2e2e2e"/>
<rect x="1252" y="829.8" width="30" height="29.5" rx="4" fill="#a8a8a8" stroke="#1e1e1e" stroke-width="2.2"/>
<rect x="1259.8" y="837.9" width="14" height="14" fill="url(#stopsq)"/>
<rect x="1291.5" y="804.5" width="275" height="65" rx="3" fill="#2a2a2a"/>
<rect x="1292.3" y="804.5" width="44.9" height="30" fill="url(#btn2)"/>
<circle cx="1314.7" cy="820" r="10" fill="url(#circg)"/>
<rect x="1339.0" y="804.5" width="43.9" height="30" fill="url(#btn2)"/>
<circle cx="1360.6" cy="820" r="10" fill="url(#circg)"/>
<rect x="1384.1" y="804.5" width="43.7" height="30" fill="url(#btn2)"/>
<circle cx="1405.8" cy="820" r="10" fill="url(#circg)"/>
<rect x="1429.0" y="804.5" width="43.9" height="30" fill="url(#btn2)"/>
<circle cx="1450.9" cy="820" r="10" fill="url(#circg)"/>
<rect x="1474.1" y="804.5" width="43.7" height="30" fill="url(#btn2)"/>
<circle cx="1495.9" cy="820" r="10" fill="url(#circg)"/>
<rect x="1519.0" y="804.5" width="50.4" height="30" fill="url(#btn2)"/>
<circle cx="1541.8" cy="820" r="10" fill="url(#circg)"/>
<rect x="1310.6" y="815.8" width="8.2" height="8" fill="#2a2a2a"/>
<path d="M1357.5 815.3 L1366 820.3 L1357.5 825.3 Z" fill="#2a2a2a"/>
<path d="M1402.5 815.5 h-2 v10 h2 M1409.5 815.5 h2 v10 h-2" fill="none" stroke="#2a2a2a" stroke-width="1.6"/>
<rect x="1404.5" y="819.6" width="1.4" height="1.4" fill="#2a2a2a"/><rect x="1406.7" y="819.6" width="1.4" height="1.4" fill="#2a2a2a"/>
<path d="M1447 820 C1445 816.5 1441.5 817.2 1441.5 820 C1441.5 822.8 1445 823.5 1447 820 C1449 816.5 1452.5 817.2 1452.5 820 C1452.5 822.8 1449 823.5 1447 820 Z" transform="translate(3.9,0)" fill="none" stroke="#2a2a2a" stroke-width="1.5"/>
<path d="M1491 820.5 A5 5 0 0 1 1499.5 816.5 M1501 819.5 A5 5 0 0 1 1492.5 823.5" fill="none" stroke="#2a2a2a" stroke-width="2"/>
<path d="M1498 814.5 L1501.5 815 L1500 818.5 Z M1494 825.5 L1490.5 825 L1492 821.5 Z" fill="#2a2a2a"/>
<rect x="1292.3" y="835.6" width="135.5" height="34" fill="url(#btn2)"/>
<circle cx="1322.8" cy="850.9" r="10" fill="url(#circg)"/>
<rect x="1429.0" y="835.6" width="141.0" height="34" fill="url(#btn2)"/>
<circle cx="1535.9" cy="850.9" r="10" fill="url(#circg)"/>
<path d="M1322.2 846.2 L1318.4 850.9 L1322.2 855.6 M1326.2 846.2 L1322.4 850.9 L1326.2 855.6" fill="none" stroke="#2a2a2a" stroke-width="1.3"/>
<path d="M1532.4 846.2 L1536.2 850.9 L1532.4 855.6 M1536.4 846.2 L1540.2 850.9 L1536.4 855.6" fill="none" stroke="#2a2a2a" stroke-width="1.3"/>
<text x="1350.2" y="858.7" font-size="22.0" fill="#2e2e2e" text-anchor="start" font-weight="normal" textLength="49.8" lengthAdjust="spacingAndGlyphs" stroke="#2e2e2e" stroke-width="0.5">Back</text>
<text x="1456.8" y="858.9" font-size="22.0" fill="#2e2e2e" text-anchor="start" font-weight="normal" textLength="51.4" lengthAdjust="spacingAndGlyphs" stroke="#2e2e2e" stroke-width="0.5">Next</text>
</svg>
</body></html>
